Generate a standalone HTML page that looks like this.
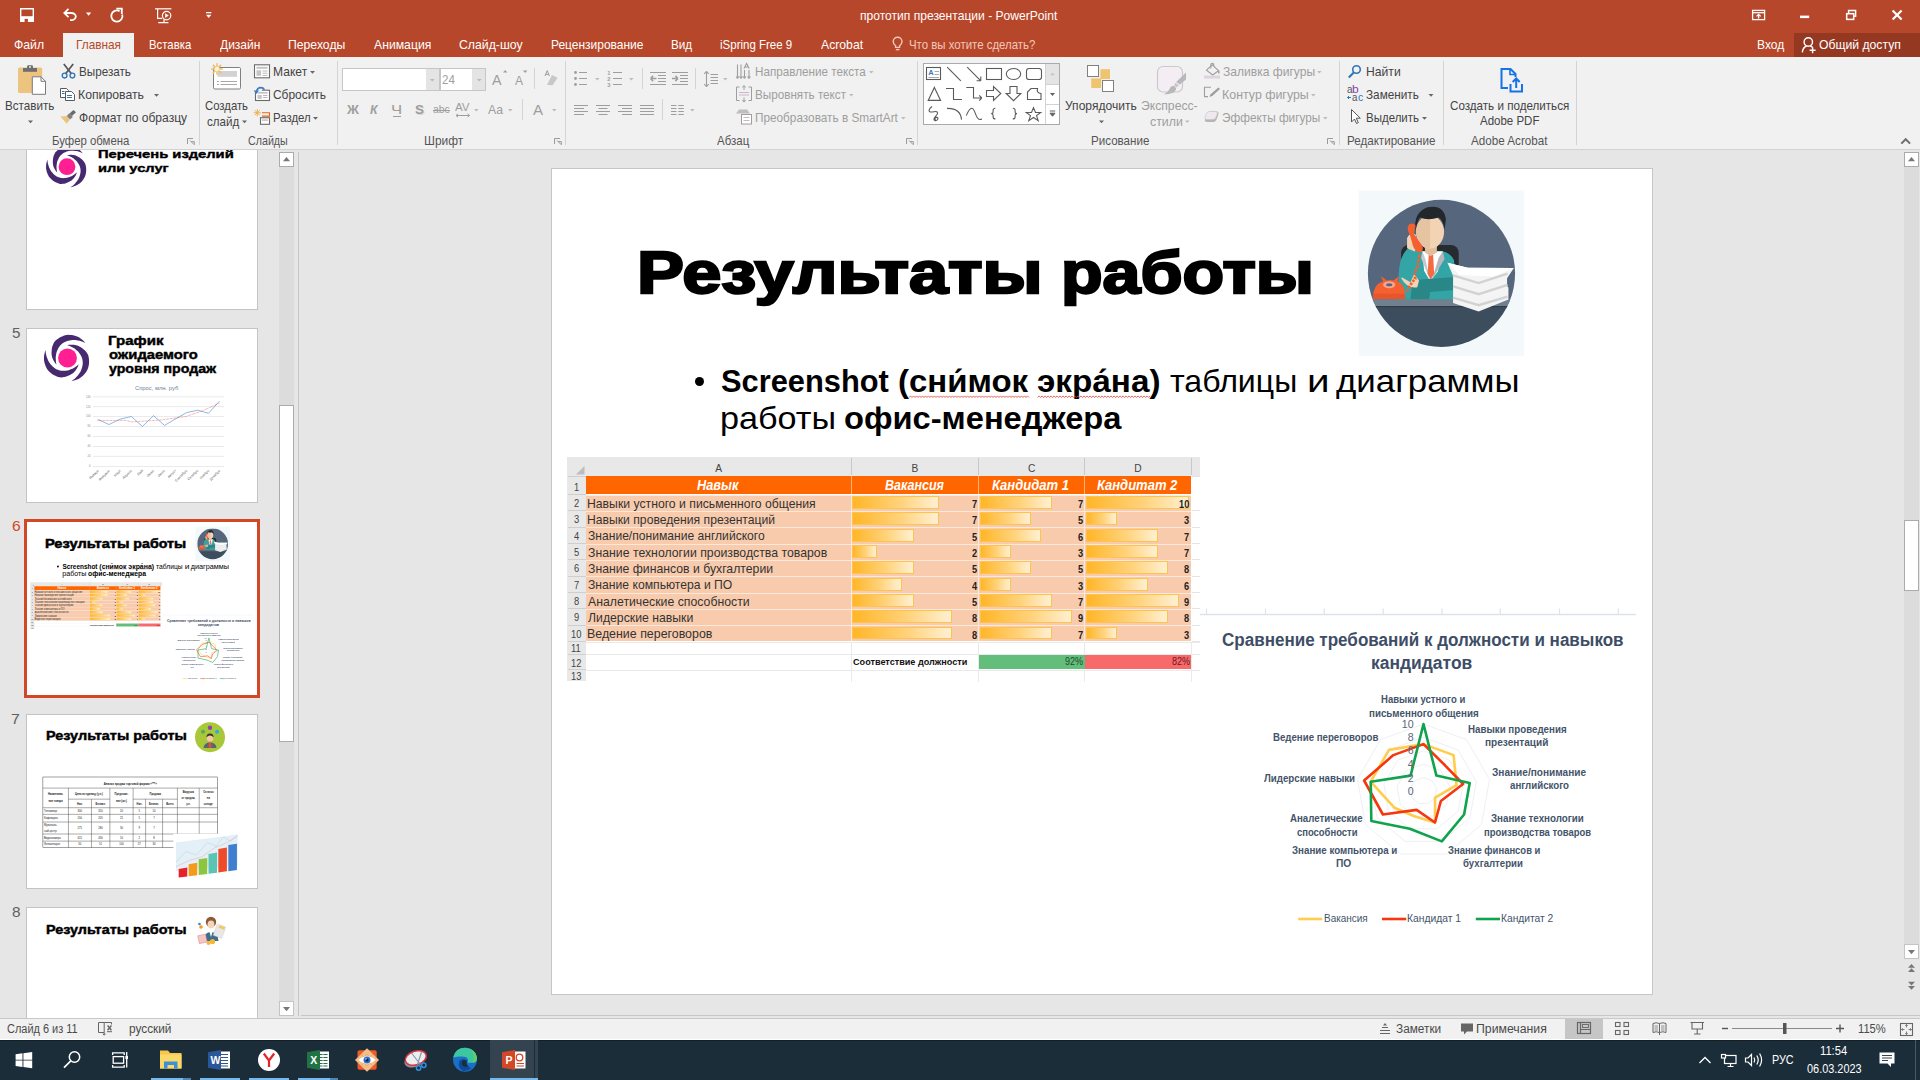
<!DOCTYPE html>
<html lang="ru"><head><meta charset="utf-8"><title>прототип презентации - PowerPoint</title>
<style>
html,body{margin:0;padding:0;}
body{width:1920px;height:1080px;overflow:hidden;position:relative;background:#E6E6E6;font-family:"Liberation Sans",sans-serif;}
.a{position:absolute;display:block;}
.t{position:absolute;white-space:nowrap;transform-origin:0 0;}
svg{overflow:visible}
svg text{font-family:"Liberation Sans",sans-serif;}
</style></head><body>
<div class="a" style="left:0.00px;top:0.00px;width:1920.00px;height:57.00px;background:#B7472A;"></div>
<div class="a" style="left:1794.00px;top:33.00px;width:126.00px;height:24.00px;background:#953822;"></div>
<div class="a" style="left:63.00px;top:33.00px;width:71.00px;height:24.00px;background:#F1F1F1;"></div>
<div class="a" style="left:0.00px;top:57.00px;width:1920.00px;height:92.00px;background:#F1F1F1;"></div>
<div class="a" style="left:0.00px;top:149.00px;width:1920.00px;height:1.00px;background:#D2D2D2;"></div>
<div class="t" style="left:14.30px;top:38.50px;font-size:12.40px;line-height:12.40px;color:#fff;transform:scaleX(0.9858);">Файл</div>
<div class="t" style="left:148.67px;top:38.50px;font-size:12.40px;line-height:12.40px;color:#fff;transform:scaleX(0.9163);">Вставка</div>
<div class="t" style="left:219.91px;top:38.50px;font-size:12.40px;line-height:12.40px;color:#fff;transform:scaleX(0.9698);">Дизайн</div>
<div class="t" style="left:288.01px;top:38.50px;font-size:12.40px;line-height:12.40px;color:#fff;transform:scaleX(0.9858);">Переходы</div>
<div class="t" style="left:373.98px;top:38.50px;font-size:12.40px;line-height:12.40px;color:#fff;transform:scaleX(0.9856);">Анимация</div>
<div class="t" style="left:459.38px;top:38.50px;font-size:12.40px;line-height:12.40px;color:#fff;transform:scaleX(0.9901);">Слайд-шоу</div>
<div class="t" style="left:551.02px;top:38.50px;font-size:12.40px;line-height:12.40px;color:#fff;transform:scaleX(0.9662);">Рецензирование</div>
<div class="t" style="left:671.04px;top:38.50px;font-size:12.40px;line-height:12.40px;color:#fff;transform:scaleX(0.9432);">Вид</div>
<div class="t" style="left:720.23px;top:38.50px;font-size:12.40px;line-height:12.40px;color:#fff;transform:scaleX(0.9285);">iSpring Free 9</div>
<div class="t" style="left:820.98px;top:38.50px;font-size:12.40px;line-height:12.40px;color:#fff;transform:scaleX(0.9855);">Acrobat</div>
<div class="t" style="left:75.53px;top:38.50px;font-size:12.40px;line-height:12.40px;color:#B7472A;transform:scaleX(0.9543);">Главная</div>
<div class="t" style="left:908.71px;top:38.50px;font-size:12.40px;line-height:12.40px;color:#F2C8BA;transform:scaleX(0.9229);">Что вы хотите сделать?</div>
<div class="t" style="left:859.66px;top:9.83px;font-size:12.60px;line-height:12.60px;color:#fff;transform:scaleX(0.9594);">прототип презентации - PowerPoint</div>
<div class="t" style="left:1757.01px;top:38.50px;font-size:12.40px;line-height:12.40px;color:#fff;transform:scaleX(0.9693);">Вход</div>
<div class="t" style="left:1819.42px;top:38.50px;font-size:12.40px;line-height:12.40px;color:#fff;transform:scaleX(0.9833);">Общий доступ</div>
<svg class="a" style="left:0.00px;top:0.00px;" width="1920" height="60" viewBox="0 0 1920 60"><g fill="none" stroke="#fff" stroke-width="1.4"><path d="M20.7 8.7h12.6v12.6h-12.6z"/></g><path fill="#fff" d="M21 16.200h12v5.800h-12z"/><rect x="24.600" y="18.900" width="3.300" height="3.200" fill="#B7472A"/><g fill="none" stroke="#fff" stroke-width="1.800" stroke-linecap="butt"><path d="M68.5 8.8l-4.2 4.2l4.2 4.2"/><path d="M64.6 13h6.6a4.6 3.6 0 0 1 0 7.2h-1.2"/><path d="M119.6 11.2a5.6 5.6 0 1 0 2.6 3.2"/><path d="M116.4 8.6h5.4v5.4" /></g><path fill="#fff" d="M86 12.6h5.2l-2.6 3.2z"/><g fill="none" stroke="#fff" stroke-width="1.2"><path d="M155 8.8h16.4"/><path d="M157.6 9v9.4h4.6"/><circle cx="166.6" cy="15.6" r="4.2"/><path d="M164 19.2v3.2M158.2 22.6h10.2"/></g><path fill="#fff" d="M165.2 13.2l3.6 2.4l-3.6 2.4z"/><path fill="#fff" d="M206 12h5.4v1.2h-5.4zM206 14.8h5.4l-2.7 3.2z"/><g fill="none" stroke="#F2C8BA" stroke-width="1.400"><path d="M895.6 47.4v-1.6c-1.6-1.2-2.4-2.6-2.4-4.2a4.4 4.4 0 0 1 8.8 0c0 1.6-0.8 3-2.4 4.2v1.6z"/><path d="M895.8 49.6h3.6"/></g><g fill="none" stroke="#fff" stroke-width="1.300"><rect x="1752.600" y="10.400" width="12" height="9.200"/><path d="M1752.600 12.700h12"/><path d="M1758.600 18.400v-3.800M1756.500 16.400l2.100-2.100l2.100 2.100"/></g><path fill="#fff" d="M1800 15.600h9.200v2.500h-9.200z"/><g fill="none" stroke="#fff" stroke-width="1.500"><rect x="1846.700" y="13.700" width="7" height="5.700"/><path d="M1848.600 13.500v-3h7v5.700h-2"/></g><path stroke="#fff" stroke-width="2.200" d="M1892.600 10.400l9 9.200M1901.600 10.400l-9 9.200"/><g fill="none" stroke="#fff" stroke-width="1.400"><circle cx="1808.300" cy="42" r="4.200"/><path d="M1802.300 52.300c0.500-3.600 2-5.600 4.400-6.300M1810.200 46c1 0.300 1.800 0.800 2.500 1.500"/><path d="M1812.600 47.200v6M1809.600 50.200h6"/></g></svg>
<div class="a" style="left:199.00px;top:61.00px;width:1.00px;height:84.00px;background:#D4D4D4;"></div>
<div class="a" style="left:337.00px;top:61.00px;width:1.00px;height:84.00px;background:#D4D4D4;"></div>
<div class="a" style="left:565.00px;top:61.00px;width:1.00px;height:84.00px;background:#D4D4D4;"></div>
<div class="a" style="left:917.00px;top:61.00px;width:1.00px;height:84.00px;background:#D4D4D4;"></div>
<div class="a" style="left:1339.00px;top:61.00px;width:1.00px;height:84.00px;background:#D4D4D4;"></div>
<div class="a" style="left:1443.00px;top:61.00px;width:1.00px;height:84.00px;background:#D4D4D4;"></div>
<div class="a" style="left:1576.00px;top:61.00px;width:1.00px;height:84.00px;background:#D4D4D4;"></div>
<div class="t" style="left:5.04px;top:99.67px;font-size:12.20px;line-height:12.20px;color:#444;transform:scaleX(0.9559);">Вставить</div>
<div class="t" style="left:78.54px;top:65.67px;font-size:12.20px;line-height:12.20px;color:#444;transform:scaleX(0.9571);">Вырезать</div>
<div class="t" style="left:78.49px;top:88.67px;font-size:12.20px;line-height:12.20px;color:#444;transform:scaleX(1.0048);">Копировать</div>
<div class="t" style="left:78.80px;top:111.67px;font-size:12.20px;line-height:12.20px;color:#444;transform:scaleX(0.9892);">Формат по образцу</div>
<div class="t" style="left:51.57px;top:134.67px;font-size:12.20px;line-height:12.20px;color:#555;transform:scaleX(0.9341);">Буфер обмена</div>
<div class="t" style="left:204.92px;top:99.67px;font-size:12.20px;line-height:12.20px;color:#444;transform:scaleX(0.9283);">Создать</div>
<div class="t" style="left:207.01px;top:115.67px;font-size:12.20px;line-height:12.20px;color:#444;transform:scaleX(0.9485);">слайд</div>
<div class="t" style="left:273.01px;top:65.67px;font-size:12.20px;line-height:12.20px;color:#444;transform:scaleX(0.9904);">Макет</div>
<div class="t" style="left:273.39px;top:88.67px;font-size:12.20px;line-height:12.20px;color:#444;transform:scaleX(0.9791);">Сбросить</div>
<div class="t" style="left:273.06px;top:111.67px;font-size:12.20px;line-height:12.20px;color:#444;transform:scaleX(0.9356);">Раздел</div>
<div class="t" style="left:248.46px;top:134.67px;font-size:12.20px;line-height:12.20px;color:#555;transform:scaleX(0.8760);">Слайды</div>
<div class="a" style="left:342.00px;top:68.00px;width:98.00px;height:23.00px;background:#fff;border:1px solid #C6C6C6;box-sizing:border-box;"></div>
<div class="a" style="left:426.00px;top:69.00px;width:13.00px;height:21.00px;background:#E4E4E4;"></div>
<div class="a" style="left:440.00px;top:68.00px;width:46.00px;height:23.00px;background:#fff;border:1px solid #C6C6C6;box-sizing:border-box;"></div>
<div class="a" style="left:472.00px;top:69.00px;width:13.00px;height:21.00px;background:#E4E4E4;"></div>
<div class="t" style="left:442.42px;top:73.67px;font-size:12.20px;line-height:12.20px;color:#9E9E9E;transform:scaleX(0.9524);">24</div>
<div class="t" style="left:492.47px;top:72.30px;font-size:15.00px;line-height:15.00px;color:#9E9E9E;transform:scaleX(0.9551);">A</div>
<div class="t" style="left:514.98px;top:74.84px;font-size:12.00px;line-height:12.00px;color:#9E9E9E;transform:scaleX(1.0054);">A</div>
<div class="a" style="left:534.00px;top:67.50px;width:1.00px;height:21.50px;background:#D4D4D4;"></div>
<div class="t" style="left:347.04px;top:103.00px;font-size:13.00px;line-height:13.00px;color:#9E9E9E;font-weight:bold;transform:scaleX(1.0125);">Ж</div>
<div class="t" style="left:369.79px;top:103.00px;font-size:13.00px;line-height:13.00px;color:#9E9E9E;font-weight:bold;font-style:italic;transform:scaleX(0.9405);">К</div>
<div class="t" style="left:391.19px;top:103.00px;font-size:13.00px;line-height:13.00px;color:#9E9E9E;transform:scaleX(1.2900);">Ч</div>
<div class="a" style="left:392.50px;top:115.50px;width:8.50px;height:1.00px;background:#9E9E9E;"></div>
<div class="t" style="left:414.62px;top:103.00px;font-size:13.00px;line-height:13.00px;color:#9E9E9E;font-weight:bold;transform:scaleX(1.0271);text-shadow:1px 1px 0 #D8D8D8;">S</div>
<div class="t" style="left:432.56px;top:104.27px;font-size:11.50px;line-height:11.50px;color:#9E9E9E;transform:scaleX(0.9014);">abc</div>
<div class="a" style="left:432.50px;top:110.00px;width:17.00px;height:1.00px;background:#9E9E9E;"></div>
<div class="t" style="left:455.48px;top:102.19px;font-size:11.00px;line-height:11.00px;color:#9E9E9E;transform:scaleX(1.0517);">AV</div>
<div class="t" style="left:487.98px;top:103.00px;font-size:13.00px;line-height:13.00px;color:#9E9E9E;transform:scaleX(0.9448);">Aa</div>
<div class="a" style="left:522.00px;top:99.00px;width:1.00px;height:21.00px;background:#D4D4D4;"></div>
<div class="t" style="left:532.97px;top:102.30px;font-size:15.00px;line-height:15.00px;color:#9E9E9E;transform:scaleX(1.0054);">A</div>
<div class="t" style="left:423.52px;top:134.67px;font-size:12.20px;line-height:12.20px;color:#555;transform:scaleX(0.9761);">Шрифт</div>
<div class="a" style="left:642.00px;top:67.50px;width:1.00px;height:21.50px;background:#D4D4D4;"></div>
<div class="a" style="left:695.00px;top:67.50px;width:1.00px;height:21.50px;background:#D4D4D4;"></div>
<div class="t" style="left:755.04px;top:65.67px;font-size:12.20px;line-height:12.20px;color:#9E9E9E;transform:scaleX(0.9594);">Направление текста</div>
<div class="t" style="left:755.04px;top:88.67px;font-size:12.20px;line-height:12.20px;color:#9E9E9E;transform:scaleX(0.9592);">Выровнять текст</div>
<div class="t" style="left:755.04px;top:111.67px;font-size:12.20px;line-height:12.20px;color:#9E9E9E;transform:scaleX(0.9666);">Преобразовать в SmartArt</div>
<div class="a" style="left:662.00px;top:99.00px;width:1.00px;height:21.00px;background:#D4D4D4;"></div>
<div class="t" style="left:716.98px;top:134.67px;font-size:12.20px;line-height:12.20px;color:#555;transform:scaleX(0.9434);">Абзац</div>
<div class="a" style="left:923.00px;top:63.00px;width:137.00px;height:62.00px;background:#fff;border:1px solid #A6ABB0;box-sizing:border-box;"></div>
<div class="a" style="left:1045.00px;top:64.00px;width:1.00px;height:60.00px;background:#D0D3D6;"></div>
<div class="a" style="left:1046.00px;top:64.00px;width:13.00px;height:20.00px;background:#E4E4E4;"></div>
<div class="a" style="left:1046.00px;top:84.00px;width:13.00px;height:1.00px;background:#D0D3D6;"></div>
<div class="a" style="left:1046.00px;top:103.50px;width:13.00px;height:1.00px;background:#D0D3D6;"></div>
<div class="t" style="left:1064.68px;top:99.67px;font-size:12.20px;line-height:12.20px;color:#444;transform:scaleX(0.9892);">Упорядочить</div>
<div class="t" style="left:1141.38px;top:99.67px;font-size:12.20px;line-height:12.20px;color:#9E9E9E;transform:scaleX(0.9979);">Экспресс-</div>
<div class="t" style="left:1150.47px;top:115.67px;font-size:12.20px;line-height:12.20px;color:#9E9E9E;transform:scaleX(1.0138);">стили</div>
<div class="t" style="left:1222.60px;top:65.67px;font-size:12.20px;line-height:12.20px;color:#9E9E9E;transform:scaleX(0.9899);">Заливка фигуры</div>
<div class="t" style="left:1221.98px;top:88.67px;font-size:12.20px;line-height:12.20px;color:#9E9E9E;transform:scaleX(1.0184);">Контур фигуры</div>
<div class="t" style="left:1222.39px;top:111.67px;font-size:12.20px;line-height:12.20px;color:#9E9E9E;transform:scaleX(0.9681);">Эффекты фигуры</div>
<div class="t" style="left:1091.05px;top:134.67px;font-size:12.20px;line-height:12.20px;color:#555;transform:scaleX(0.9516);">Рисование</div>
<div class="t" style="left:1365.60px;top:65.67px;font-size:12.20px;line-height:12.20px;color:#444;transform:scaleX(0.9980);">Найти</div>
<div class="t" style="left:1365.92px;top:88.67px;font-size:12.20px;line-height:12.20px;color:#444;transform:scaleX(0.9643);">Заменить</div>
<div class="t" style="left:1365.66px;top:111.67px;font-size:12.20px;line-height:12.20px;color:#444;transform:scaleX(0.9437);">Выделить</div>
<div class="t" style="left:1346.65px;top:134.67px;font-size:12.20px;line-height:12.20px;color:#555;transform:scaleX(0.9519);">Редактирование</div>
<div class="t" style="left:1346.68px;top:83.91px;font-size:10.50px;line-height:10.50px;color:#555;transform:scaleX(0.9455);">a</div>
<div class="t" style="left:1352.23px;top:83.91px;font-size:10.50px;line-height:10.50px;color:#8A3FA8;transform:scaleX(1.1436);">b</div>
<div class="t" style="left:1352.19px;top:91.51px;font-size:10.50px;line-height:10.50px;color:#555;transform:scaleX(0.9270);">a</div>
<div class="t" style="left:1357.76px;top:91.51px;font-size:10.50px;line-height:10.50px;color:#2E75B6;transform:scaleX(0.9940);">c</div>
<div class="t" style="left:1449.91px;top:99.67px;font-size:12.20px;line-height:12.20px;color:#444;transform:scaleX(0.9539);">Создать и поделиться</div>
<div class="t" style="left:1479.98px;top:115.17px;font-size:12.20px;line-height:12.20px;color:#444;transform:scaleX(0.9431);">Adobe PDF</div>
<div class="t" style="left:1470.98px;top:134.67px;font-size:12.20px;line-height:12.20px;color:#555;transform:scaleX(0.9571);">Adobe Acrobat</div>
<svg class="a" style="left:0.00px;top:0.00px;" width="1920" height="150" viewBox="0 0 1920 150"><path fill="#666" d="M28.0 120.5h5.0l-2.5 2.8z"/><path fill="#666" d="M154.0 94.0h5.0l-2.5 2.8z"/><g fill="none" stroke="#9A9A9A" stroke-width="1"><path d="M187.5 144.0v-5.500h5.500"/><path d="M190.0 140.5l4 4M194.3 144.8v-3.2h-3.2" /></g><rect x="18" y="67.5" width="24.200" height="25.500" rx="1.500" fill="#EDC47F"/><rect x="23" y="68" width="14" height="3.800" fill="#6E6E6E"/><path d="M27 68.500v-1.800q0-1.400 1.400-1.400h3.200q1.400 0 1.400 1.400v1.800z" fill="#6E6E6E"/><rect x="29" y="66.300" width="2" height="1.400" fill="#F1F1F1"/><path d="M32.300 76.800h8.700l4.500 4.500v13h-13.200z" fill="#fff" stroke="#7A7A7A" stroke-width="1"/><path d="M41 76.800v4.500h4.500" fill="none" stroke="#7A7A7A" stroke-width="1"/><g fill="none" stroke="#555" stroke-width="1.700"><path d="M63.800 64l7.800 10M73.200 64l-7.800 10"/></g><g fill="none" stroke="#2E75B6" stroke-width="1.3"><circle cx="64.6" cy="75.6" r="2.4"/><circle cx="72.4" cy="75.6" r="2.4"/></g><g fill="#fff" stroke="#5A5A5A" stroke-width="1"><path d="M60.5 88.5h6l2 2v7h-8z"/><path d="M65.5 91.5h6l3 3v6h-9z"/></g><g stroke="#2E75B6" stroke-width="1"><path d="M67 95.5h5M67 97.5h5M62 91.5h2.5M62 93.5h2.5"/></g><path d="M73.400 110.100l2.600 2.100l-4.100 3.700l-2.600-2.100z" fill="#6A6A6A"/><path d="M69.300 113.300l3.600 3.600l-2.900 2.600l-3.300-3.600z" fill="#808080"/><path d="M66.700 115.900l3.300 3.600l-3.300 4.200l-6.300-7.300z" fill="#EDC47F"/><path fill="#666" d="M242.0 120.5h5.0l-2.5 2.8z"/><path fill="#666" d="M310.0 71.0h5.0l-2.5 2.8z"/><path fill="#666" d="M313.0 117.0h5.0l-2.5 2.8z"/><rect x="213.500" y="67.500" width="27" height="21.500" rx="1.200" fill="#fff" stroke="#808080"/><rect x="217.500" y="71" width="19.500" height="5.800" fill="#D2D2D2"/><path d="M217 81.500h2M220.500 81.500h16.500M217 84.500h2M220.500 84.500h16.500" stroke="#A8A8A8"/><g stroke="#F0C060" stroke-width="1.500"><path d="M217 63.200v11.600M211.200 69h11.600M212.900 64.900l8.200 8.200M221.100 64.900l-8.200 8.200"/></g><circle cx="217" cy="69" r="2.300" fill="#F1F1F1"/><rect x="254.500" y="64.800" width="15" height="13" fill="#fff" stroke="#6A6A6A" stroke-width="1.100"/><rect x="256.500" y="66.800" width="11" height="2" fill="#C4C4C4"/><rect x="256.500" y="70.300" width="4.600" height="5.500" fill="#C4C4C4"/><path d="M262.500 71h5M262.500 73.200h5M262.500 75.400h5" stroke="#B0B0B0" stroke-width="0.900"/><rect x="255.500" y="90.200" width="14" height="10.300" fill="#fff" stroke="#6A6A6A" stroke-width="1.100"/><rect x="257.500" y="92" width="10" height="1.700" fill="#C4C4C4"/><rect x="257.500" y="95" width="4.300" height="3.800" fill="#C4C4C4"/><path d="M263 95.500h4.500M263 97.500h4.500" stroke="#B0B0B0" stroke-width="0.900"/><rect x="253" y="86" width="9" height="6" fill="#F1F1F1"/><path d="M256.300 92.600q0.400-5 4.700-5q2.300 0 3.400 2" fill="none" stroke="#3B7DC4" stroke-width="1.600"/><path d="M253.600 90.600h5.400l-2.700 3.400z" fill="#3B7DC4"/><g stroke="#F0B050" stroke-width="1"><path d="M257.300 109.200v7M253.800 112.700h7M254.800 110.200l5 5M259.800 110.200l-5 5"/></g><path d="M262 112.700h7.500v3.400h-7.500" fill="none" stroke="#E8651A" stroke-width="1.100"/><rect x="260.500" y="117.700" width="9" height="6.600" fill="#fff" stroke="#6A6A6A" stroke-width="1.100"/><rect x="262" y="119.300" width="6" height="1.600" fill="#C4C4C4"/><path fill="#B8B8B8" d="M430.0 79.0h4.6l-2.3 2.6z"/><path fill="#B8B8B8" d="M477.0 79.0h4.6l-2.3 2.6z"/><path d="M503 72.6l2.2-2.6l2.2 2.6z" fill="#9E9E9E"/><path d="M523 70.4h4.4l-2.2 2.6z" fill="#9E9E9E"/><path d="M547 85l5-10l5.6 2.8l-5 7.4z" fill="#C8C8C8"/><path d="M545 76l2.2-5.4l2.2 5.4M545.8 74.4h2.8" fill="none" stroke="#9E9E9E" stroke-width="1"/><path d="M456 115.5h13.6M456 115.5l2-1.6M456 115.5l2 1.6M469.6 115.5l-2-1.6M469.6 115.5l-2 1.6" stroke="#9E9E9E" fill="none"/><path fill="#BDBDBD" d="M474.0 109.0h4.6l-2.3 2.6z"/><path fill="#BDBDBD" d="M508.0 109.0h4.6l-2.3 2.6z"/><path fill="#BDBDBD" d="M552.0 109.0h4.6l-2.3 2.6z"/><g fill="none" stroke="#9A9A9A" stroke-width="1"><path d="M554.5 144.0v-5.500h5.500"/><path d="M557.0 140.5l4 4M561.3 144.8v-3.2h-3.2" /></g><circle cx="575.500" cy="72.5" r="1.400" fill="#9E9E9E"/><path d="M579 72.5h8" stroke="#9E9E9E" stroke-width="1"/><circle cx="575.500" cy="78.5" r="1.400" fill="#9E9E9E"/><path d="M579 78.5h8" stroke="#9E9E9E" stroke-width="1"/><circle cx="575.500" cy="84.5" r="1.400" fill="#9E9E9E"/><path d="M579 84.5h8" stroke="#9E9E9E" stroke-width="1"/><path fill="#BDBDBD" d="M595.0 78.0h4.6l-2.3 2.6z"/><path d="M613 72.5h9" stroke="#9E9E9E" stroke-width="1"/><text x="607.300" y="74.6" font-size="5.800" font-weight="bold" fill="#9E9E9E">1</text><path d="M613 78.5h9" stroke="#9E9E9E" stroke-width="1"/><text x="607.300" y="80.6" font-size="5.800" font-weight="bold" fill="#9E9E9E">2</text><path d="M613 84.5h9" stroke="#9E9E9E" stroke-width="1"/><text x="607.300" y="86.6" font-size="5.800" font-weight="bold" fill="#9E9E9E">3</text><path fill="#BDBDBD" d="M629.0 78.0h4.6l-2.3 2.6z"/><path d="M650.0 72.500h16M658.0 75.500h8M658.0 78.500h8M658.0 81.500h8M650.0 84.500h16" stroke="#9E9E9E" stroke-width="1"/><path d="M650.5 78.500h6M650.5 78.500l2.600-2.600M650.5 78.500l2.600 2.600" stroke="#9E9E9E" fill="none" stroke-width="1.500"/><path d="M672.0 72.500h16M680.0 75.500h8M680.0 78.500h8M680.0 81.500h8M672.0 84.500h16" stroke="#9E9E9E" stroke-width="1"/><path d="M672.0 78.500h6M678.0 78.500l-2.600-2.600M678.0 78.500l-2.600 2.600" stroke="#9E9E9E" fill="none" stroke-width="1.500"/><path d="M710.500 74.500h7.500M710.500 77.500h7.500M710.500 80.500h7.500M710.500 83.500h7.500" stroke="#9E9E9E" stroke-width="1"/><path d="M706.500 72v14M706.500 71.300l-2.400 2.700M706.500 71.300l2.400 2.700M706.500 86.700l-2.400-2.700M706.500 86.700l2.400-2.700" stroke="#9E9E9E" fill="none" stroke-width="1.100"/><path fill="#BDBDBD" d="M723.0 78.0h4.6l-2.3 2.6z"/><g stroke="#9E9E9E" fill="none" stroke-width="1.1"><path d="M737.5 64.5v12.5M741 64.5v12.5M744.5 70v7M749 70v7M737.5 78.5l-1.4-2M737.5 78.5l1.4-2M741 78.5l-1.4-2M741 78.5l1.4-2M744.5 78.5l-1.4-2M744.5 78.5l1.4-2M749 78.5l-1.4-2M749 78.5l1.4-2"/><path d="M744 68.5l2.6-5l2.6 5M745 67h3.4"/></g><path fill="#BDBDBD" d="M869.0 71.0h4.6l-2.3 2.6z"/><g stroke="#9E9E9E" fill="none" stroke-width="1"><path d="M739.5 87h-3v13.5h3M748.5 87h3v13.5h-3"/><path d="M739 92.5h10M739 95h10" stroke="#CDB5C8"/><path d="M744 86v4M744 85.5l-1.6 2M744 85.5l1.6 2M744 97.5v4M744 102l-1.6-2M744 102l1.6-2"/></g><path fill="#BDBDBD" d="M849.0 94.0h4.6l-2.3 2.6z"/><path d="M736 113.5l3-4h8l3 4z" fill="#BEBEBE"/><rect x="741.5" y="114.5" width="10" height="9.5" fill="#fff" stroke="#9E9E9E"/><path d="M743.5 117.5h6M743.5 120.5h6" stroke="#CDB5C8"/><path fill="#BDBDBD" d="M901.0 117.0h4.6l-2.3 2.6z"/><path d="M574.0 105.5h14.0M574.0 108.5h10.0M574.0 111.5h14.0M574.0 114.5h10.0" stroke="#9E9E9E" stroke-width="1"/><path d="M596.0 105.5h14.0M598.5 108.5h9.0M596.0 111.5h14.0M598.5 114.5h9.0" stroke="#9E9E9E" stroke-width="1"/><path d="M618.0 105.5h14.0M622.0 108.5h10.0M618.0 111.5h14.0M622.0 114.5h10.0" stroke="#9E9E9E" stroke-width="1"/><path d="M640.0 105.5h14.0M640.0 108.5h14.0M640.0 111.5h14.0M640.0 114.5h14.0" stroke="#9E9E9E" stroke-width="1"/><path d="M671 105.5h5.500M678.300 105.5h5.500M671 108.5h5.500M678.300 108.5h5.500M671 111.5h5.500M678.300 111.5h5.500M671 114.5h5.500M678.300 114.5h5.500" stroke="#9E9E9E" stroke-width="1"/><path fill="#BDBDBD" d="M690.0 109.0h4.6l-2.3 2.6z"/><g fill="none" stroke="#9A9A9A" stroke-width="1"><path d="M906.5 144.0v-5.500h5.500"/><path d="M909.0 140.5l4 4M913.3 144.8v-3.2h-3.2" /></g><path d="M1050 75.300l2.500-2.800l2.500 2.800z" fill="#C6C6C6"/><path d="M1050 93h5l-2.500 3z" fill="#606060"/><path d="M1049.800 111h5.400M1050 113.200h5l-2.500 3z" fill="#606060" stroke="#606060" stroke-width="1"/><g fill="none" stroke="#5A5A5A" stroke-width="1.100"><rect x="926.500" y="67.500" width="14" height="12"/><path d="M947.200 67.200l13.600 13.600"/><path d="M967.200 67.200l13.600 13.600M980.800 80.800v-4.200M980.800 80.800h-4.200"/><rect x="986.500" y="68.500" width="15" height="11"/><ellipse cx="1013.500" cy="74" rx="7.200" ry="5.500"/><rect x="1026.500" y="68.500" width="15" height="11" rx="2.600"/><path d="M934.400 87.400l6.200 13h-12.400z"/><path d="M946 88.500h7.500v11h8.500"/><path d="M966.300 87.500h7.200v10.500h8M981.800 98l-2.600-2.600M981.800 98l-2.600 2.600"/><path d="M986.500 90.500h7v-4l7.300 7l-7.300 7v-4h-7z"/><path d="M1010 86.500h7v7h3.800l-7.300 7.200l-7.300-7.200h3.800z"/><path d="M1027.500 99.500v-7.500l3.500-3.500h6.500q-1.200 4.600 3.500 5v6z"/><path d="M932 106.500c-3 2-4 5-1.500 5.500c3 0.500 6-2 7 0.500c1 2.500-4 4.500-3.500 7c0.500 2 4 1 4-1c0-1.500-2.500-1.500-3-0.300c-0.500 1.500 0.500 2.300 1 2.800"/><path d="M947 108.400q13.500-0.400 14.500 11.200"/><path d="M966.300 115.600c2-5 3.600-7.400 5.600-7.400c3.400 0 3.600 11.400 7.800 11.300q1.200 0 2.200-0.500"/><path d="M995.400 108.300q-2.300 0-2.300 2v1.600q0 1.700-1.900 1.700q1.900 0 1.900 1.700v1.600q0 2 2.300 2"/><path d="M1012.800 108.300q2.300 0 2.300 2v1.600q0 1.700 1.900 1.700q-1.900 0-1.900 1.700v1.600q0 2-2.300 2"/><path d="M1033.500 107.600l2 4.900h5.200l-4.200 3.100l1.700 5l-4.700-3.100l-4.700 3.100l1.700-5l-4.200-3.100h5.200z"/></g><text x="928.300" y="75.300" font-size="7.500" font-weight="bold" fill="#3B78C3">A</text><path d="M934.500 71.500h4.500M934.500 74.500h4.500M928.500 77.500h10.500" stroke="#A0A0A0" stroke-width="0.900"/><rect x="1100.400" y="69.200" width="9.600" height="9.800" fill="#EFC46F"/><rect x="1091.200" y="78.400" width="9.900" height="9.600" fill="#EFC46F"/><rect x="1087.500" y="65.500" width="11" height="11" fill="#fff" stroke="#808080"/><rect x="1102.500" y="80.500" width="11" height="11" fill="#fff" stroke="#808080"/><path fill="#666" d="M1099.0 120.5h5.0l-2.5 2.8z"/><rect x="1157.500" y="66.500" width="25" height="25.500" rx="5.500" fill="#F4EEF4" stroke="#CCC8CC" stroke-width="1.200"/><path d="M1186 72.600v6.800l-6.200 5.200l-3.600-2.600z" fill="#B8B8B8"/><path d="M1175.600 82.800l3.400 2.500l-2.600 2.200l-2.400-2.200z" fill="#C8C8C8"/><path d="M1173.500 86q3 1 2.500 3.500q-1.500 4.500-12 5q5-3.500 6-6.500q1-2.500 3.500-2z" fill="#B8B8B8"/><path fill="#BDBDBD" d="M1185.0 120.5h4.6l-2.3 2.6z"/><path fill="#BDBDBD" d="M1317.0 71.0h4.6l-2.3 2.6z"/><path fill="#BDBDBD" d="M1311.0 94.0h4.6l-2.3 2.6z"/><path fill="#BDBDBD" d="M1323.0 117.0h4.6l-2.3 2.6z"/><g fill="none" stroke="#9E9E9E" stroke-width="1.100"><path d="M1206.500 70.200l5.800-5.400l6.200 5.800l-5.800 4.400z"/><path d="M1210.800 68.500v-3.600q0-1.600 1.500-1.600q1.500 0 1.500 1.600v1.200"/></g><path d="M1218.600 69.500q1.800 2.800 0.400 4.400q-1.600-0.600-0.400-4.400z" fill="#9E9E9E"/><rect x="1204" y="75.600" width="16" height="3" fill="#DDD5DD"/><g fill="none" stroke="#9E9E9E" stroke-width="1.100"><path d="M1211 87.200h-6.500v9.400h3.500"/></g><path d="M1218.400 87.400l1.600 1.600l-7.800 7l-2.800 1l1.200-2.800z" fill="#9E9E9E"/><path d="M1207.500 122q-3.500 0-2.500-3l1.800-5q0.900-2.500 3.500-2.500h6q3 0 2 3l-1.800 5q-0.900 2.500-3.500 2.500z" fill="#B5B5B5"/><path d="M1207.300 119.600q-3 0-2.200-2.400l1.400-3.600q0.800-2.200 3.200-2.200h5.600q2.800 0 2 2.400l-1.400 3.600q-0.800 2.200-3.200 2.200z" fill="#EFE9EF" stroke="#C4C0C4" stroke-width="0.600"/><g fill="none" stroke="#9A9A9A" stroke-width="1"><path d="M1327.5 144.0v-5.500h5.500"/><path d="M1330.0 140.5l4 4M1334.3 144.8v-3.2h-3.2" /></g><path fill="#666" d="M1428.5 94.0h5.0l-2.5 2.8z"/><path fill="#666" d="M1422.0 117.0h5.0l-2.5 2.8z"/><circle cx="1356.500" cy="69.500" r="3.800" fill="none" stroke="#2E75B6" stroke-width="1.600"/><path d="M1353.800 72.500l-5 5" stroke="#2E75B6" stroke-width="2"/><path d="M1347.500 97.500h3.500M1347.500 97.500l1.500-1.500M1347.500 97.500l1.500 1.500" stroke="#2E75B6" fill="none"/><path d="M1351.500 109.500v12.500l3-3l2 4.500l1.800-0.800l-2-4.500h4z" fill="#fff" stroke="#555" stroke-width="1"/><g fill="none" stroke="#1473E6" stroke-width="2"><path d="M1508 88h-6.500v-19h9l5 5v3"/><path d="M1510 69v5.500h5.500" stroke-width="1.600"/><path d="M1510.500 84v7.500h11.500v-7.500M1516.200 88v-9M1512.700 82l3.500-3.500l3.500 3.500"/></g><path d="M1901.300 143.600l4.400-4.400l4.400 4.400" fill="none" stroke="#6E6E6E" stroke-width="2"/></svg>
<div class="a" style="left:0;top:150px;width:278px;height:868px;overflow:hidden"><div class="a" style="left:0;top:-150px;width:278px;height:1080px">
<div class="a" style="left:26.00px;top:135.00px;width:232.00px;height:175.00px;background:#fff;border:1px solid #C4C4C4;box-sizing:border-box;"></div>
<div class="a" style="left:26.00px;top:328.00px;width:232.00px;height:175.00px;background:#fff;border:1px solid #C4C4C4;box-sizing:border-box;"></div>
<div class="a" style="left:24.00px;top:519.00px;width:236.00px;height:179.00px;background:#D24726;"></div>
<div class="a" style="left:27.00px;top:522.00px;width:230.00px;height:173.00px;background:#fff;"></div>
<div class="a" style="left:26.00px;top:714.00px;width:232.00px;height:175.00px;background:#fff;border:1px solid #C4C4C4;box-sizing:border-box;"></div>
<div class="a" style="left:26.00px;top:907.00px;width:232.00px;height:175.00px;background:#fff;border:1px solid #C4C4C4;box-sizing:border-box;"></div>
<div class="t" style="left:11.69px;top:326.34px;font-size:14.60px;line-height:14.60px;color:#606060;transform:scaleX(1.0401);">5</div>
<div class="t" style="left:11.51px;top:519.34px;font-size:14.60px;line-height:14.60px;color:#D24726;transform:scaleX(1.0687);">6</div>
<div class="t" style="left:11.49px;top:712.34px;font-size:14.60px;line-height:14.60px;color:#606060;transform:scaleX(1.0848);">7</div>
<div class="t" style="left:11.63px;top:905.34px;font-size:14.60px;line-height:14.60px;color:#606060;transform:scaleX(1.0509);">8</div>
<div class="t" style="left:97.71px;top:149.05px;font-size:11.40px;line-height:11.40px;color:#000;font-weight:bold;transform:scaleX(1.2923);-webkit-text-stroke:0.4px #000;">Перечень изделий</div>
<div class="t" style="left:97.68px;top:163.35px;font-size:11.40px;line-height:11.40px;color:#000;font-weight:bold;transform:scaleX(1.2855);-webkit-text-stroke:0.4px #000;">или услуг</div>
<div class="t" style="left:108.29px;top:334.39px;font-size:13.60px;line-height:13.60px;color:#000;font-weight:bold;transform:scaleX(1.1071);-webkit-text-stroke:0.45px #000;">График</div>
<div class="t" style="left:108.72px;top:348.19px;font-size:13.60px;line-height:13.60px;color:#000;font-weight:bold;transform:scaleX(1.0876);-webkit-text-stroke:0.45px #000;">ожидаемого</div>
<div class="t" style="left:109.19px;top:362.09px;font-size:13.60px;line-height:13.60px;color:#000;font-weight:bold;transform:scaleX(1.0429);-webkit-text-stroke:0.45px #000;">уровня продаж</div>
<div class="t" style="left:134.70px;top:386.23px;font-size:5.40px;line-height:5.40px;color:#6F7F95;transform:scaleX(1.0788);">Спрос, млн. руб</div>
<div class="a" style="left:27px;top:521.800px;width:1101px;height:826px;transform:scale(0.20850);transform-origin:0 0;overflow:hidden">
<div class="t" style="left:85.79px;top:74.51px;font-size:60.00px;line-height:60.00px;color:#000;font-weight:bold;transform:scaleX(1.1726);-webkit-text-stroke:2.4px #000;">Результаты</div>
<div class="t" style="left:509.61px;top:74.51px;font-size:60.00px;line-height:60.00px;color:#000;font-weight:bold;transform:scaleX(1.1349);-webkit-text-stroke:2.4px #000;">работы</div>
<div class="a" style="left:143.5px;top:208.5px;width:9px;height:9px;border-radius:50%;background:#000"></div>
<div class="t" style="left:169.81px;top:197.31px;font-size:32.00px;line-height:32.00px;color:#000;font-weight:bold;transform:scaleX(0.9632);">Screenshot</div>
<div class="t" style="left:346.86px;top:197.31px;font-size:32.00px;line-height:32.00px;color:#000;font-weight:bold;transform:scaleX(1.0305);">(сни́мок</div>
<div class="t" style="left:486.46px;top:197.31px;font-size:32.00px;line-height:32.00px;color:#000;font-weight:bold;transform:scaleX(1.0394);">экра́на)</div>
<div class="t" style="left:618.95px;top:197.31px;font-size:32.00px;line-height:32.00px;color:#000;transform:scaleX(1.0032);">таблицы</div>
<div class="t" style="left:756.19px;top:197.31px;font-size:32.00px;line-height:32.00px;color:#000;transform:scaleX(1.2651);">и</div>
<div class="t" style="left:784.66px;top:197.31px;font-size:32.00px;line-height:32.00px;color:#000;transform:scaleX(1.0880);">диаграммы</div>
<div class="t" style="left:168.50px;top:233.91px;font-size:32.00px;line-height:32.00px;color:#000;transform:scaleX(1.0681);">работы</div>
<div class="t" style="left:292.52px;top:233.91px;font-size:32.00px;line-height:32.00px;color:#000;font-weight:bold;transform:scaleX(1.0201);">офис-менеджера</div>
<svg class="a" style="left:0;top:0" width="1101" height="826"><path d="M358.0 229.5l1.5 -1.6l1.5 1.6l1.5 -1.6l1.5 1.6l1.5 -1.6l1.5 1.6l1.5 -1.6l1.5 1.6l1.5 -1.6l1.5 1.6l1.5 -1.6l1.5 1.6l1.5 -1.6l1.5 1.6l1.5 -1.6l1.5 1.6l1.5 -1.6l1.5 1.6l1.5 -1.6l1.5 1.6l1.5 -1.6l1.5 1.6l1.5 -1.6l1.5 1.6l1.5 -1.6l1.5 1.6l1.5 -1.6l1.5 1.6l1.5 -1.6l1.5 1.6l1.5 -1.6l1.5 1.6l1.5 -1.6l1.5 1.6l1.5 -1.6l1.5 1.6l1.5 -1.6l1.5 1.6l1.5 -1.6l1.5 1.6l1.5 -1.6l1.5 1.6l1.5 -1.6l1.5 1.6l1.5 -1.6l1.5 1.6l1.5 -1.6l1.5 1.6l1.5 -1.6l1.5 1.6l1.5 -1.6l1.5 1.6l1.5 -1.6l1.5 1.6l1.5 -1.6l1.5 1.6l1.5 -1.6l1.5 1.6l1.5 -1.6l1.5 1.6l1.5 -1.6l1.5 1.6l1.5 -1.6l1.5 1.6l1.5 -1.6l1.5 1.6l1.5 -1.6l1.5 1.6l1.5 -1.6l1.5 1.6l1.5 -1.6l1.5 1.6l1.5 -1.6l1.5 1.6l1.5 -1.6l1.5 1.6l1.5 -1.6l1.5 1.6l1.5 -1.6l1.5 1.6" fill="none" stroke="#E0443A" stroke-width="0.8"/></svg>
<svg class="a" style="left:0;top:0" width="1101" height="826"><path d="M486.6 229.5l1.5 -1.6l1.5 1.6l1.5 -1.6l1.5 1.6l1.5 -1.6l1.5 1.6l1.5 -1.6l1.5 1.6l1.5 -1.6l1.5 1.6l1.5 -1.6l1.5 1.6l1.5 -1.6l1.5 1.6l1.5 -1.6l1.5 1.6l1.5 -1.6l1.5 1.6l1.5 -1.6l1.5 1.6l1.5 -1.6l1.5 1.6l1.5 -1.6l1.5 1.6l1.5 -1.6l1.5 1.6l1.5 -1.6l1.5 1.6l1.5 -1.6l1.5 1.6l1.5 -1.6l1.5 1.6l1.5 -1.6l1.5 1.6l1.5 -1.6l1.5 1.6l1.5 -1.6l1.5 1.6l1.5 -1.6l1.5 1.6l1.5 -1.6l1.5 1.6l1.5 -1.6l1.5 1.6l1.5 -1.6l1.5 1.6l1.5 -1.6l1.5 1.6l1.5 -1.6l1.5 1.6l1.5 -1.6l1.5 1.6l1.5 -1.6l1.5 1.6l1.5 -1.6l1.5 1.6l1.5 -1.6l1.5 1.6l1.5 -1.6l1.5 1.6l1.5 -1.6l1.5 1.6l1.5 -1.6l1.5 1.6l1.5 -1.6l1.5 1.6l1.5 -1.6l1.5 1.6l1.5 -1.6l1.5 1.6l1.5 -1.6l1.5 1.6l1.5 -1.6l1.5 1.6l1.5 -1.6" fill="none" stroke="#E0443A" stroke-width="0.8"/></svg>
<svg class="a" style="left:799px;top:12px" width="184" height="184" viewBox="0 0 1080 1080"><rect x="52" y="62" width="968" height="970" fill="#F3F8FB"/><clipPath id="cm2"><circle cx="537" cy="548" r="432"/></clipPath><g clip-path="url(#cm2)"><rect x="100" y="110" width="880" height="640" fill="#56677D"/><rect x="300" y="382" width="338" height="330" rx="45" fill="#262B30"/><path d="M330 420q60-20 105 0l35 60l40-60q70-10 100 50l25 250h-360l15-200q5-70 40-100z" fill="#33A5A6"/><path d="M425 418h120l-30 120l-45 55l-35-60z" fill="#fff"/><path d="M425 418l-8 40l55 135l-30-130z" fill="#C5C9CC"/><path d="M545 418l10 45l-75 125l40-130z" fill="#B4B8BC"/><path d="M462 440h26l6 110l-20 35l-18-35z" fill="#F26B43"/><path d="M440 380h70v45l-38 22l-32-22z" fill="#E3BE9C"/><path d="M395 585l220-15v75l-145 12l-5 45h-110l10-100z" fill="#2A8788"/><path d="M300 575q40-45 75-25l30 40l-10 40q-60 10-95-55z" fill="#F2D3B3"/><ellipse cx="470" cy="305" rx="82" ry="98" fill="#F2D3B3"/><path d="M470 207a82 98 0 0 0 0 196z" fill="#E6C3A1"/><path d="M385 300q-15-110 70-140q95-20 108 70l-8 60q-10-60-35-70q-60 20-110 0q-20 30-25 80z" fill="#23262B"/><path d="M285 560q10-130 60-160l40 20l10 90l-40 90z" fill="#33A5A6"/><path d="M335 340q20-40 50-20l15 60l-20 40l-45-20z" fill="#F2D3B3"/><path d="M345 262q25-15 40 5l-10 50l50 70q10 30-15 40q-30-10-40-40l-20-70q-20-30-5-55z" fill="#F4602F"/><path d="M408 440q-10 40-10 70q-25 30-15 70q-30 30-50 80" fill="none" stroke="#F4602F" stroke-width="16" stroke-dasharray="14 8"/><path d="M135 690q0-75 60-95l-15-30q20 10 35 25q20-5 40 0q15-15 35-25l-12 30q50 20 45 95z" fill="#F4602F"/><rect x="135" y="668" width="188" height="34" rx="8" fill="#E8552A"/><ellipse cx="230" cy="615" rx="36" ry="20" fill="#F7A58B"/><ellipse cx="230" cy="615" rx="18" ry="9" fill="#56677D"/><rect x="100" y="700" width="880" height="42" fill="#71808F"/><rect x="100" y="740" width="880" height="10" fill="#2C3844"/><rect x="100" y="748" width="880" height="260" fill="#3C4D5D"/><path d="M572 485l120 30l270 2l-40 60v45l8 10v70l-175 70l-150-50v-160z" fill="#F4F4F4"/><path d="M605 560l150 45l170-55M605 625l150 45l170-55M605 690l150 45l170-50" fill="none" stroke="#D2D2D2" stroke-width="14"/><path d="M572 485l120 30l270 2l-120 50l-200-10z" fill="#FFFFFF"/></g></svg>
<div class="a" style="left:15.80px;top:288.80px;width:633.00px;height:224.40px;background:#fff;"></div>
<div class="a" style="left:15.80px;top:288.80px;width:633.00px;height:18.80px;background:#E8E8E8;"></div>
<div class="a" style="left:15.80px;top:288.80px;width:19.60px;height:224.40px;background:#E8E8E8;"></div>
<div class="a" style="left:299.50px;top:290.00px;width:1.00px;height:17.00px;background:#C8C8C8;"></div>
<div class="a" style="left:427.30px;top:290.00px;width:1.00px;height:17.00px;background:#C8C8C8;"></div>
<div class="a" style="left:533.20px;top:290.00px;width:1.00px;height:17.00px;background:#C8C8C8;"></div>
<div class="a" style="left:639.80px;top:290.00px;width:1.00px;height:17.00px;background:#C8C8C8;"></div>
<svg class="a" style="left:23.3px;top:295.5px" width="12" height="12"><path d="M10.500 2v8.500h-8.500z" fill="#BDBDBD"/></svg>
<div class="t" style="left:164.30px;top:295.67px;font-size:10.20px;line-height:10.20px;color:#444;">A</div>
<div class="t" style="left:360.50px;top:295.67px;font-size:10.20px;line-height:10.20px;color:#444;">B</div>
<div class="t" style="left:477.07px;top:295.67px;font-size:10.20px;line-height:10.20px;color:#444;">C</div>
<div class="t" style="left:583.32px;top:295.67px;font-size:10.20px;line-height:10.20px;color:#444;">D</div>
<div class="a" style="left:35.40px;top:308.20px;width:604.90px;height:18.00px;background:#FF6600;"></div>
<div class="a" style="left:299.50px;top:308.20px;width:1.00px;height:18.00px;background:#FFB27A;"></div>
<div class="a" style="left:427.30px;top:308.20px;width:1.00px;height:18.00px;background:#FFB27A;"></div>
<div class="a" style="left:533.20px;top:308.20px;width:1.00px;height:18.00px;background:#FFB27A;"></div>
<div class="t" style="left:145.78px;top:310.45px;font-size:14.00px;line-height:14.00px;color:#fff;font-weight:bold;font-style:italic;transform:scaleX(0.9119);">Навык</div>
<div class="t" style="left:333.78px;top:310.45px;font-size:14.00px;line-height:14.00px;color:#fff;font-weight:bold;font-style:italic;transform:scaleX(0.8932);">Вакансия</div>
<div class="t" style="left:441.37px;top:310.45px;font-size:14.00px;line-height:14.00px;color:#fff;font-weight:bold;font-style:italic;transform:scaleX(0.9336);">Кандидат 1</div>
<div class="t" style="left:545.77px;top:310.45px;font-size:14.00px;line-height:14.00px;color:#fff;font-weight:bold;font-style:italic;transform:scaleX(0.9300);">Кандитат 2</div>
<div class="a" style="left:35.40px;top:326.60px;width:604.90px;height:16.32px;background:#F8CBAD;"></div>
<div class="a" style="left:35.40px;top:326.60px;width:604.90px;height:1.00px;background:#FCE8DC;"></div>
<div class="t" style="left:36.00px;top:329.83px;font-size:12.60px;line-height:12.60px;color:#333;transform:scaleX(0.9701);">Навыки устного и письменного общения</div>
<div class="a" style="left:301.00px;top:328.00px;width:87.22px;height:12.92px;background:linear-gradient(90deg,#FFB628 0%,#FFD27A 55%,#FFF0D2 100%);border:1px solid #FFC24B;box-sizing:border-box;"></div>
<div class="t" style="left:420.66px;top:330.99px;font-size:11.00px;line-height:11.00px;color:#222;font-weight:bold;transform:scaleX(0.8400);">7</div>
<div class="a" style="left:428.80px;top:328.00px;width:71.89px;height:12.92px;background:linear-gradient(90deg,#FFB628 0%,#FFD27A 55%,#FFF0D2 100%);border:1px solid #FFC24B;box-sizing:border-box;"></div>
<div class="t" style="left:526.56px;top:330.99px;font-size:11.00px;line-height:11.00px;color:#222;font-weight:bold;transform:scaleX(0.8400);">7</div>
<div class="a" style="left:534.70px;top:328.00px;width:103.40px;height:12.92px;background:linear-gradient(90deg,#FFB628 0%,#FFD27A 55%,#FFF0D2 100%);border:1px solid #FFC24B;box-sizing:border-box;"></div>
<div class="t" style="left:628.02px;top:330.99px;font-size:11.00px;line-height:11.00px;color:#222;font-weight:bold;transform:scaleX(0.8400);">10</div>
<div class="a" style="left:299.50px;top:326.60px;width:1.00px;height:16.32px;background:#FCE8DC;"></div>
<div class="a" style="left:427.30px;top:326.60px;width:1.00px;height:16.32px;background:#FCE8DC;"></div>
<div class="a" style="left:533.20px;top:326.60px;width:1.00px;height:16.32px;background:#FCE8DC;"></div>
<div class="a" style="left:35.40px;top:342.92px;width:604.90px;height:16.32px;background:#F8CBAD;"></div>
<div class="a" style="left:35.40px;top:342.92px;width:604.90px;height:1.00px;background:#FCE8DC;"></div>
<div class="t" style="left:36.00px;top:346.15px;font-size:12.60px;line-height:12.60px;color:#333;transform:scaleX(0.9663);">Навыки проведения презентаций</div>
<div class="a" style="left:301.00px;top:344.32px;width:87.22px;height:12.92px;background:linear-gradient(90deg,#FFB628 0%,#FFD27A 55%,#FFF0D2 100%);border:1px solid #FFC24B;box-sizing:border-box;"></div>
<div class="t" style="left:420.66px;top:347.31px;font-size:11.00px;line-height:11.00px;color:#222;font-weight:bold;transform:scaleX(0.8400);">7</div>
<div class="a" style="left:428.80px;top:344.32px;width:51.35px;height:12.92px;background:linear-gradient(90deg,#FFB628 0%,#FFD27A 55%,#FFF0D2 100%);border:1px solid #FFC24B;box-sizing:border-box;"></div>
<div class="t" style="left:526.56px;top:347.31px;font-size:11.00px;line-height:11.00px;color:#222;font-weight:bold;transform:scaleX(0.8400);">5</div>
<div class="a" style="left:534.70px;top:344.32px;width:31.02px;height:12.92px;background:linear-gradient(90deg,#FFB628 0%,#FFD27A 55%,#FFF0D2 100%);border:1px solid #FFC24B;box-sizing:border-box;"></div>
<div class="t" style="left:633.16px;top:347.31px;font-size:11.00px;line-height:11.00px;color:#222;font-weight:bold;transform:scaleX(0.8400);">3</div>
<div class="a" style="left:299.50px;top:342.92px;width:1.00px;height:16.32px;background:#FCE8DC;"></div>
<div class="a" style="left:427.30px;top:342.92px;width:1.00px;height:16.32px;background:#FCE8DC;"></div>
<div class="a" style="left:533.20px;top:342.92px;width:1.00px;height:16.32px;background:#FCE8DC;"></div>
<div class="a" style="left:35.40px;top:359.24px;width:604.90px;height:16.32px;background:#F8CBAD;"></div>
<div class="a" style="left:35.40px;top:359.24px;width:604.90px;height:1.00px;background:#FCE8DC;"></div>
<div class="t" style="left:36.60px;top:362.47px;font-size:12.60px;line-height:12.60px;color:#333;transform:scaleX(0.9604);">Знание/понимание английского</div>
<div class="a" style="left:301.00px;top:360.64px;width:62.30px;height:12.92px;background:linear-gradient(90deg,#FFB628 0%,#FFD27A 55%,#FFF0D2 100%);border:1px solid #FFC24B;box-sizing:border-box;"></div>
<div class="t" style="left:420.66px;top:363.63px;font-size:11.00px;line-height:11.00px;color:#222;font-weight:bold;transform:scaleX(0.8400);">5</div>
<div class="a" style="left:428.80px;top:360.64px;width:61.62px;height:12.92px;background:linear-gradient(90deg,#FFB628 0%,#FFD27A 55%,#FFF0D2 100%);border:1px solid #FFC24B;box-sizing:border-box;"></div>
<div class="t" style="left:526.56px;top:363.63px;font-size:11.00px;line-height:11.00px;color:#222;font-weight:bold;transform:scaleX(0.8400);">6</div>
<div class="a" style="left:534.70px;top:360.64px;width:72.38px;height:12.92px;background:linear-gradient(90deg,#FFB628 0%,#FFD27A 55%,#FFF0D2 100%);border:1px solid #FFC24B;box-sizing:border-box;"></div>
<div class="t" style="left:633.16px;top:363.63px;font-size:11.00px;line-height:11.00px;color:#222;font-weight:bold;transform:scaleX(0.8400);">7</div>
<div class="a" style="left:299.50px;top:359.24px;width:1.00px;height:16.32px;background:#FCE8DC;"></div>
<div class="a" style="left:427.30px;top:359.24px;width:1.00px;height:16.32px;background:#FCE8DC;"></div>
<div class="a" style="left:533.20px;top:359.24px;width:1.00px;height:16.32px;background:#FCE8DC;"></div>
<div class="a" style="left:35.40px;top:375.56px;width:604.90px;height:16.32px;background:#F8CBAD;"></div>
<div class="a" style="left:35.40px;top:375.56px;width:604.90px;height:1.00px;background:#FCE8DC;"></div>
<div class="t" style="left:36.60px;top:378.79px;font-size:12.60px;line-height:12.60px;color:#333;transform:scaleX(0.9751);">Знание технологии производства товаров</div>
<div class="a" style="left:301.00px;top:376.96px;width:24.92px;height:12.92px;background:linear-gradient(90deg,#FFB628 0%,#FFD27A 55%,#FFF0D2 100%);border:1px solid #FFC24B;box-sizing:border-box;"></div>
<div class="t" style="left:420.66px;top:379.95px;font-size:11.00px;line-height:11.00px;color:#222;font-weight:bold;transform:scaleX(0.8400);">2</div>
<div class="a" style="left:428.80px;top:376.96px;width:30.81px;height:12.92px;background:linear-gradient(90deg,#FFB628 0%,#FFD27A 55%,#FFF0D2 100%);border:1px solid #FFC24B;box-sizing:border-box;"></div>
<div class="t" style="left:526.56px;top:379.95px;font-size:11.00px;line-height:11.00px;color:#222;font-weight:bold;transform:scaleX(0.8400);">3</div>
<div class="a" style="left:534.70px;top:376.96px;width:72.38px;height:12.92px;background:linear-gradient(90deg,#FFB628 0%,#FFD27A 55%,#FFF0D2 100%);border:1px solid #FFC24B;box-sizing:border-box;"></div>
<div class="t" style="left:633.16px;top:379.95px;font-size:11.00px;line-height:11.00px;color:#222;font-weight:bold;transform:scaleX(0.8400);">7</div>
<div class="a" style="left:299.50px;top:375.56px;width:1.00px;height:16.32px;background:#FCE8DC;"></div>
<div class="a" style="left:427.30px;top:375.56px;width:1.00px;height:16.32px;background:#FCE8DC;"></div>
<div class="a" style="left:533.20px;top:375.56px;width:1.00px;height:16.32px;background:#FCE8DC;"></div>
<div class="a" style="left:35.40px;top:391.88px;width:604.90px;height:16.32px;background:#F8CBAD;"></div>
<div class="a" style="left:35.40px;top:391.88px;width:604.90px;height:1.00px;background:#FCE8DC;"></div>
<div class="t" style="left:36.60px;top:395.11px;font-size:12.60px;line-height:12.60px;color:#333;transform:scaleX(0.9717);">Знание финансов и бухгалтерии</div>
<div class="a" style="left:301.00px;top:393.28px;width:62.30px;height:12.92px;background:linear-gradient(90deg,#FFB628 0%,#FFD27A 55%,#FFF0D2 100%);border:1px solid #FFC24B;box-sizing:border-box;"></div>
<div class="t" style="left:420.66px;top:396.27px;font-size:11.00px;line-height:11.00px;color:#222;font-weight:bold;transform:scaleX(0.8400);">5</div>
<div class="a" style="left:428.80px;top:393.28px;width:51.35px;height:12.92px;background:linear-gradient(90deg,#FFB628 0%,#FFD27A 55%,#FFF0D2 100%);border:1px solid #FFC24B;box-sizing:border-box;"></div>
<div class="t" style="left:526.56px;top:396.27px;font-size:11.00px;line-height:11.00px;color:#222;font-weight:bold;transform:scaleX(0.8400);">5</div>
<div class="a" style="left:534.70px;top:393.28px;width:82.72px;height:12.92px;background:linear-gradient(90deg,#FFB628 0%,#FFD27A 55%,#FFF0D2 100%);border:1px solid #FFC24B;box-sizing:border-box;"></div>
<div class="t" style="left:633.16px;top:396.27px;font-size:11.00px;line-height:11.00px;color:#222;font-weight:bold;transform:scaleX(0.8400);">8</div>
<div class="a" style="left:299.50px;top:391.88px;width:1.00px;height:16.32px;background:#FCE8DC;"></div>
<div class="a" style="left:427.30px;top:391.88px;width:1.00px;height:16.32px;background:#FCE8DC;"></div>
<div class="a" style="left:533.20px;top:391.88px;width:1.00px;height:16.32px;background:#FCE8DC;"></div>
<div class="a" style="left:35.40px;top:408.20px;width:604.90px;height:16.32px;background:#F8CBAD;"></div>
<div class="a" style="left:35.40px;top:408.20px;width:604.90px;height:1.00px;background:#FCE8DC;"></div>
<div class="t" style="left:36.60px;top:411.43px;font-size:12.60px;line-height:12.60px;color:#333;transform:scaleX(0.9656);">Знание компьютера и ПО</div>
<div class="a" style="left:301.00px;top:409.60px;width:49.84px;height:12.92px;background:linear-gradient(90deg,#FFB628 0%,#FFD27A 55%,#FFF0D2 100%);border:1px solid #FFC24B;box-sizing:border-box;"></div>
<div class="t" style="left:420.66px;top:412.59px;font-size:11.00px;line-height:11.00px;color:#222;font-weight:bold;transform:scaleX(0.8400);">4</div>
<div class="a" style="left:428.80px;top:409.60px;width:30.81px;height:12.92px;background:linear-gradient(90deg,#FFB628 0%,#FFD27A 55%,#FFF0D2 100%);border:1px solid #FFC24B;box-sizing:border-box;"></div>
<div class="t" style="left:526.56px;top:412.59px;font-size:11.00px;line-height:11.00px;color:#222;font-weight:bold;transform:scaleX(0.8400);">3</div>
<div class="a" style="left:534.70px;top:409.60px;width:62.04px;height:12.92px;background:linear-gradient(90deg,#FFB628 0%,#FFD27A 55%,#FFF0D2 100%);border:1px solid #FFC24B;box-sizing:border-box;"></div>
<div class="t" style="left:633.16px;top:412.59px;font-size:11.00px;line-height:11.00px;color:#222;font-weight:bold;transform:scaleX(0.8400);">6</div>
<div class="a" style="left:299.50px;top:408.20px;width:1.00px;height:16.32px;background:#FCE8DC;"></div>
<div class="a" style="left:427.30px;top:408.20px;width:1.00px;height:16.32px;background:#FCE8DC;"></div>
<div class="a" style="left:533.20px;top:408.20px;width:1.00px;height:16.32px;background:#FCE8DC;"></div>
<div class="a" style="left:35.40px;top:424.52px;width:604.90px;height:16.32px;background:#F8CBAD;"></div>
<div class="a" style="left:35.40px;top:424.52px;width:604.90px;height:1.00px;background:#FCE8DC;"></div>
<div class="t" style="left:36.98px;top:427.75px;font-size:12.60px;line-height:12.60px;color:#333;transform:scaleX(0.9750);">Аналетические способности</div>
<div class="a" style="left:301.00px;top:425.92px;width:62.30px;height:12.92px;background:linear-gradient(90deg,#FFB628 0%,#FFD27A 55%,#FFF0D2 100%);border:1px solid #FFC24B;box-sizing:border-box;"></div>
<div class="t" style="left:420.66px;top:428.91px;font-size:11.00px;line-height:11.00px;color:#222;font-weight:bold;transform:scaleX(0.8400);">5</div>
<div class="a" style="left:428.80px;top:425.92px;width:71.89px;height:12.92px;background:linear-gradient(90deg,#FFB628 0%,#FFD27A 55%,#FFF0D2 100%);border:1px solid #FFC24B;box-sizing:border-box;"></div>
<div class="t" style="left:526.56px;top:428.91px;font-size:11.00px;line-height:11.00px;color:#222;font-weight:bold;transform:scaleX(0.8400);">7</div>
<div class="a" style="left:534.70px;top:425.92px;width:93.06px;height:12.92px;background:linear-gradient(90deg,#FFB628 0%,#FFD27A 55%,#FFF0D2 100%);border:1px solid #FFC24B;box-sizing:border-box;"></div>
<div class="t" style="left:633.16px;top:428.91px;font-size:11.00px;line-height:11.00px;color:#222;font-weight:bold;transform:scaleX(0.8400);">9</div>
<div class="a" style="left:299.50px;top:424.52px;width:1.00px;height:16.32px;background:#FCE8DC;"></div>
<div class="a" style="left:427.30px;top:424.52px;width:1.00px;height:16.32px;background:#FCE8DC;"></div>
<div class="a" style="left:533.20px;top:424.52px;width:1.00px;height:16.32px;background:#FCE8DC;"></div>
<div class="a" style="left:35.40px;top:440.84px;width:604.90px;height:16.32px;background:#F8CBAD;"></div>
<div class="a" style="left:35.40px;top:440.84px;width:604.90px;height:1.00px;background:#FCE8DC;"></div>
<div class="t" style="left:36.89px;top:444.07px;font-size:12.60px;line-height:12.60px;color:#333;transform:scaleX(0.9728);">Лидерские навыки</div>
<div class="a" style="left:301.00px;top:442.24px;width:99.68px;height:12.92px;background:linear-gradient(90deg,#FFB628 0%,#FFD27A 55%,#FFF0D2 100%);border:1px solid #FFC24B;box-sizing:border-box;"></div>
<div class="t" style="left:420.66px;top:445.23px;font-size:11.00px;line-height:11.00px;color:#222;font-weight:bold;transform:scaleX(0.8400);">8</div>
<div class="a" style="left:428.80px;top:442.24px;width:92.43px;height:12.92px;background:linear-gradient(90deg,#FFB628 0%,#FFD27A 55%,#FFF0D2 100%);border:1px solid #FFC24B;box-sizing:border-box;"></div>
<div class="t" style="left:526.56px;top:445.23px;font-size:11.00px;line-height:11.00px;color:#222;font-weight:bold;transform:scaleX(0.8400);">9</div>
<div class="a" style="left:534.70px;top:442.24px;width:82.72px;height:12.92px;background:linear-gradient(90deg,#FFB628 0%,#FFD27A 55%,#FFF0D2 100%);border:1px solid #FFC24B;box-sizing:border-box;"></div>
<div class="t" style="left:633.16px;top:445.23px;font-size:11.00px;line-height:11.00px;color:#222;font-weight:bold;transform:scaleX(0.8400);">8</div>
<div class="a" style="left:299.50px;top:440.84px;width:1.00px;height:16.32px;background:#FCE8DC;"></div>
<div class="a" style="left:427.30px;top:440.84px;width:1.00px;height:16.32px;background:#FCE8DC;"></div>
<div class="a" style="left:533.20px;top:440.84px;width:1.00px;height:16.32px;background:#FCE8DC;"></div>
<div class="a" style="left:35.40px;top:457.16px;width:604.90px;height:16.32px;background:#F8CBAD;"></div>
<div class="a" style="left:35.40px;top:457.16px;width:604.90px;height:1.00px;background:#FCE8DC;"></div>
<div class="t" style="left:35.98px;top:460.39px;font-size:12.60px;line-height:12.60px;color:#333;transform:scaleX(0.9844);">Ведение переговоров</div>
<div class="a" style="left:301.00px;top:458.56px;width:99.68px;height:12.92px;background:linear-gradient(90deg,#FFB628 0%,#FFD27A 55%,#FFF0D2 100%);border:1px solid #FFC24B;box-sizing:border-box;"></div>
<div class="t" style="left:420.66px;top:461.55px;font-size:11.00px;line-height:11.00px;color:#222;font-weight:bold;transform:scaleX(0.8400);">8</div>
<div class="a" style="left:428.80px;top:458.56px;width:71.89px;height:12.92px;background:linear-gradient(90deg,#FFB628 0%,#FFD27A 55%,#FFF0D2 100%);border:1px solid #FFC24B;box-sizing:border-box;"></div>
<div class="t" style="left:526.56px;top:461.55px;font-size:11.00px;line-height:11.00px;color:#222;font-weight:bold;transform:scaleX(0.8400);">7</div>
<div class="a" style="left:534.70px;top:458.56px;width:31.02px;height:12.92px;background:linear-gradient(90deg,#FFB628 0%,#FFD27A 55%,#FFF0D2 100%);border:1px solid #FFC24B;box-sizing:border-box;"></div>
<div class="t" style="left:633.16px;top:461.55px;font-size:11.00px;line-height:11.00px;color:#222;font-weight:bold;transform:scaleX(0.8400);">3</div>
<div class="a" style="left:299.50px;top:457.16px;width:1.00px;height:16.32px;background:#FCE8DC;"></div>
<div class="a" style="left:427.30px;top:457.16px;width:1.00px;height:16.32px;background:#FCE8DC;"></div>
<div class="a" style="left:533.20px;top:457.16px;width:1.00px;height:16.32px;background:#FCE8DC;"></div>
<div class="a" style="left:35.40px;top:473.60px;width:613.40px;height:1.00px;background:#EAEAEA;"></div>
<div class="a" style="left:35.40px;top:486.40px;width:613.40px;height:1.00px;background:#EAEAEA;"></div>
<div class="a" style="left:35.40px;top:501.60px;width:613.40px;height:1.00px;background:#EAEAEA;"></div>
<div class="a" style="left:299.50px;top:473.60px;width:1.00px;height:40.00px;background:#EAEAEA;"></div>
<div class="a" style="left:427.30px;top:473.60px;width:1.00px;height:40.00px;background:#EAEAEA;"></div>
<div class="a" style="left:533.20px;top:473.60px;width:1.00px;height:40.00px;background:#EAEAEA;"></div>
<div class="a" style="left:639.80px;top:473.60px;width:1.00px;height:40.00px;background:#EAEAEA;"></div>
<div class="a" style="left:640.80px;top:342.42px;width:8.00px;height:1.00px;background:#E4E4E4;"></div>
<div class="a" style="left:640.80px;top:358.74px;width:8.00px;height:1.00px;background:#E4E4E4;"></div>
<div class="a" style="left:640.80px;top:375.06px;width:8.00px;height:1.00px;background:#E4E4E4;"></div>
<div class="a" style="left:640.80px;top:391.38px;width:8.00px;height:1.00px;background:#E4E4E4;"></div>
<div class="a" style="left:640.80px;top:407.70px;width:8.00px;height:1.00px;background:#E4E4E4;"></div>
<div class="a" style="left:640.80px;top:424.02px;width:8.00px;height:1.00px;background:#E4E4E4;"></div>
<div class="a" style="left:640.80px;top:440.34px;width:8.00px;height:1.00px;background:#E4E4E4;"></div>
<div class="a" style="left:640.80px;top:456.66px;width:8.00px;height:1.00px;background:#E4E4E4;"></div>
<div class="a" style="left:640.80px;top:472.98px;width:8.00px;height:1.00px;background:#E4E4E4;"></div>
<div class="a" style="left:640.80px;top:308.00px;width:8.00px;height:1.00px;background:#E4E4E4;"></div>
<div class="t" style="left:23.00px;top:314.80px;font-size:10.40px;line-height:10.40px;color:#444;transform:scaleX(0.9000);">1</div>
<div class="t" style="left:23.00px;top:331.10px;font-size:10.40px;line-height:10.40px;color:#444;transform:scaleX(0.9000);">2</div>
<div class="t" style="left:23.00px;top:347.40px;font-size:10.40px;line-height:10.40px;color:#444;transform:scaleX(0.9000);">3</div>
<div class="t" style="left:23.00px;top:363.80px;font-size:10.40px;line-height:10.40px;color:#444;transform:scaleX(0.9000);">4</div>
<div class="t" style="left:23.00px;top:380.00px;font-size:10.40px;line-height:10.40px;color:#444;transform:scaleX(0.9000);">5</div>
<div class="t" style="left:23.00px;top:396.40px;font-size:10.40px;line-height:10.40px;color:#444;transform:scaleX(0.9000);">6</div>
<div class="t" style="left:23.00px;top:412.70px;font-size:10.40px;line-height:10.40px;color:#444;transform:scaleX(0.9000);">7</div>
<div class="t" style="left:23.00px;top:429.00px;font-size:10.40px;line-height:10.40px;color:#444;transform:scaleX(0.9000);">8</div>
<div class="t" style="left:23.00px;top:445.40px;font-size:10.40px;line-height:10.40px;color:#444;transform:scaleX(0.9000);">9</div>
<div class="t" style="left:20.30px;top:461.70px;font-size:10.40px;line-height:10.40px;color:#444;transform:scaleX(0.9000);">10</div>
<div class="t" style="left:20.30px;top:476.30px;font-size:10.40px;line-height:10.40px;color:#444;transform:scaleX(0.9000);">11</div>
<div class="t" style="left:20.30px;top:490.60px;font-size:10.40px;line-height:10.40px;color:#444;transform:scaleX(0.9000);">12</div>
<div class="t" style="left:20.30px;top:504.30px;font-size:10.40px;line-height:10.40px;color:#444;transform:scaleX(0.9000);">13</div>
<div class="a" style="left:16.50px;top:307.70px;width:18.50px;height:1.00px;background:#CFCFCF;"></div>
<div class="a" style="left:16.50px;top:326.10px;width:18.50px;height:1.00px;background:#CFCFCF;"></div>
<div class="a" style="left:16.50px;top:342.42px;width:18.50px;height:1.00px;background:#CFCFCF;"></div>
<div class="a" style="left:16.50px;top:358.74px;width:18.50px;height:1.00px;background:#CFCFCF;"></div>
<div class="a" style="left:16.50px;top:375.06px;width:18.50px;height:1.00px;background:#CFCFCF;"></div>
<div class="a" style="left:16.50px;top:391.38px;width:18.50px;height:1.00px;background:#CFCFCF;"></div>
<div class="a" style="left:16.50px;top:407.70px;width:18.50px;height:1.00px;background:#CFCFCF;"></div>
<div class="a" style="left:16.50px;top:424.02px;width:18.50px;height:1.00px;background:#CFCFCF;"></div>
<div class="a" style="left:16.50px;top:440.34px;width:18.50px;height:1.00px;background:#CFCFCF;"></div>
<div class="a" style="left:16.50px;top:456.66px;width:18.50px;height:1.00px;background:#CFCFCF;"></div>
<div class="a" style="left:16.50px;top:472.98px;width:18.50px;height:1.00px;background:#CFCFCF;"></div>
<div class="a" style="left:16.50px;top:485.90px;width:18.50px;height:1.00px;background:#CFCFCF;"></div>
<div class="a" style="left:16.50px;top:501.10px;width:18.50px;height:1.00px;background:#CFCFCF;"></div>
<div class="a" style="left:16.50px;top:473.10px;width:18.50px;height:1.00px;background:#CFCFCF;"></div>
<div class="a" style="left:427.80px;top:487.00px;width:105.90px;height:14.40px;background:#63BE7B;"></div>
<div class="a" style="left:533.70px;top:487.00px;width:106.60px;height:14.40px;background:#F8696B;"></div>
<div class="t" style="left:302.43px;top:489.47px;font-size:9.60px;line-height:9.60px;color:#111;font-weight:bold;transform:scaleX(0.9483);">Соответствие должности</div>
<div class="t" style="left:514.08px;top:488.46px;font-size:10.80px;line-height:10.80px;color:#1E4D2B;transform:scaleX(0.8347);">92%</div>
<div class="t" style="left:620.61px;top:488.46px;font-size:10.80px;line-height:10.80px;color:#6B1A1C;transform:scaleX(0.8381);">82%</div>
<svg class="a" style="left:649px;top:432px" width="460" height="350" viewBox="1200 600 460 350"><path d="M1200 614.500h436" stroke="#DDE3EA" stroke-width="1.300"/><path d="M1206.5 608.500v6" stroke="#DDE3EA" stroke-width="1.200"/><path d="M1265.5 608.500v6" stroke="#DDE3EA" stroke-width="1.200"/><path d="M1324.2 608.500v6" stroke="#DDE3EA" stroke-width="1.200"/><path d="M1383.1 608.500v6" stroke="#DDE3EA" stroke-width="1.200"/><path d="M1442.0 608.500v6" stroke="#DDE3EA" stroke-width="1.200"/><path d="M1500.2 608.500v6" stroke="#DDE3EA" stroke-width="1.200"/><path d="M1559.5 608.500v6" stroke="#DDE3EA" stroke-width="1.200"/><path d="M1618.3 608.500v6" stroke="#DDE3EA" stroke-width="1.200"/><polygon points="1423.5,777.6 1432.1,780.7 1436.7,788.7 1435.1,797.7 1428.1,803.6 1418.9,803.6 1411.9,797.7 1410.3,788.7 1414.9,780.7" fill="none" stroke="#E9EBF0" stroke-width="0.8"/><polygon points="1423.5,764.2 1440.7,770.5 1449.9,786.3 1446.7,804.4 1432.7,816.2 1414.3,816.2 1400.3,804.4 1397.1,786.3 1406.3,770.5" fill="none" stroke="#E9EBF0" stroke-width="0.8"/><polygon points="1423.5,750.8 1449.3,760.2 1463.1,784.0 1458.3,811.1 1437.2,828.8 1409.8,828.8 1388.7,811.1 1383.9,784.0 1397.7,760.2" fill="none" stroke="#E9EBF0" stroke-width="0.8"/><polygon points="1423.5,737.4 1458.0,749.9 1476.3,781.7 1469.9,817.8 1441.8,841.4 1405.2,841.4 1377.1,817.8 1370.7,781.7 1389.0,749.9" fill="none" stroke="#E9EBF0" stroke-width="0.8"/><polygon points="1423.5,724.0 1466.6,739.7 1489.5,779.4 1481.5,824.5 1446.4,854.0 1400.6,854.0 1365.5,824.5 1357.5,779.4 1380.4,739.7" fill="none" stroke="#E9EBF0" stroke-width="0.8"/><polygon points="1423.5,744.1 1453.6,755.1 1456.5,785.2 1435.1,797.7 1435.0,822.5 1414.3,816.2 1394.5,807.8 1370.7,781.7 1389.0,749.9" fill="none" stroke="#FFCC4D" stroke-width="2.6" stroke-linejoin="round"/><polygon points="1423.5,744.1 1445.0,765.3 1463.1,784.0 1440.9,801.0 1435.0,822.5 1416.6,809.9 1382.9,814.5 1364.1,780.5 1393.4,755.1" fill="none" stroke="#F5360F" stroke-width="2.6" stroke-linejoin="round"/><polygon points="1423.5,724.0 1436.4,775.6 1469.7,782.9 1464.1,814.5 1441.8,841.4 1409.8,828.8 1371.3,821.1 1370.7,781.7 1410.6,775.6" fill="none" stroke="#0FA34D" stroke-width="2.6" stroke-linejoin="round"/><path d="M1298.2 919h24" stroke="#FFCC4D" stroke-width="2.6"/><path d="M1382 919h24.2" stroke="#F5360F" stroke-width="2.6"/><path d="M1475.8 919h24.2" stroke="#0FA34D" stroke-width="2.6"/></svg>
<div class="t" style="left:671.00px;top:463.69px;font-size:17.50px;line-height:17.50px;color:#3E4D66;font-weight:bold;transform:scaleX(0.9733);">Сравнение требований к должности и навыков</div>
<div class="t" style="left:819.79px;top:487.29px;font-size:17.50px;line-height:17.50px;color:#3E4D66;font-weight:bold;transform:scaleX(0.9974);">кандидатов</div>
<div class="t" style="left:850.81px;top:550.53px;font-size:10.60px;line-height:10.60px;color:#5A6678;">10</div>
<div class="t" style="left:856.70px;top:564.03px;font-size:10.60px;line-height:10.60px;color:#5A6678;">8</div>
<div class="t" style="left:856.70px;top:577.33px;font-size:10.60px;line-height:10.60px;color:#5A6678;">6</div>
<div class="t" style="left:856.70px;top:590.63px;font-size:10.60px;line-height:10.60px;color:#5A6678;">4</div>
<div class="t" style="left:856.70px;top:604.53px;font-size:10.60px;line-height:10.60px;color:#5A6678;">2</div>
<div class="t" style="left:856.70px;top:618.03px;font-size:10.60px;line-height:10.60px;color:#5A6678;">0</div>
<div class="t" style="left:830.36px;top:526.33px;font-size:10.60px;line-height:10.60px;color:#44546A;font-weight:bold;transform:scaleX(0.8997);">Навыки устного и</div>
<div class="t" style="left:817.72px;top:539.53px;font-size:10.60px;line-height:10.60px;color:#44546A;font-weight:bold;transform:scaleX(0.9215);">письменного общения</div>
<div class="t" style="left:916.95px;top:556.23px;font-size:10.60px;line-height:10.60px;color:#44546A;font-weight:bold;transform:scaleX(0.9197);">Навыки проведения</div>
<div class="t" style="left:934.20px;top:569.43px;font-size:10.60px;line-height:10.60px;color:#44546A;font-weight:bold;transform:scaleX(0.9486);">презентаций</div>
<div class="t" style="left:940.97px;top:598.73px;font-size:10.60px;line-height:10.60px;color:#44546A;font-weight:bold;transform:scaleX(0.9511);">Знание/понимание</div>
<div class="t" style="left:958.72px;top:612.03px;font-size:10.60px;line-height:10.60px;color:#44546A;font-weight:bold;transform:scaleX(0.9157);">английского</div>
<div class="t" style="left:939.98px;top:645.03px;font-size:10.60px;line-height:10.60px;color:#44546A;font-weight:bold;transform:scaleX(0.9228);">Знание технологии</div>
<div class="t" style="left:932.64px;top:658.53px;font-size:10.60px;line-height:10.60px;color:#44546A;font-weight:bold;transform:scaleX(0.8927);">производства товаров</div>
<div class="t" style="left:896.59px;top:676.53px;font-size:10.60px;line-height:10.60px;color:#44546A;font-weight:bold;transform:scaleX(0.8931);">Знание финансов и</div>
<div class="t" style="left:912.46px;top:689.53px;font-size:10.60px;line-height:10.60px;color:#44546A;font-weight:bold;transform:scaleX(0.9082);">бухгалтерии</div>
<div class="t" style="left:741.08px;top:676.53px;font-size:10.60px;line-height:10.60px;color:#44546A;font-weight:bold;transform:scaleX(0.9191);">Знание компьютера и</div>
<div class="t" style="left:784.62px;top:689.53px;font-size:10.60px;line-height:10.60px;color:#44546A;font-weight:bold;transform:scaleX(0.9653);">ПО</div>
<div class="t" style="left:739.46px;top:645.03px;font-size:10.60px;line-height:10.60px;color:#44546A;font-weight:bold;transform:scaleX(0.9137);">Аналетические</div>
<div class="t" style="left:745.63px;top:658.53px;font-size:10.60px;line-height:10.60px;color:#44546A;font-weight:bold;transform:scaleX(0.8915);">способности</div>
<div class="t" style="left:712.86px;top:604.73px;font-size:10.60px;line-height:10.60px;color:#44546A;font-weight:bold;transform:scaleX(0.9175);">Лидерские навыки</div>
<div class="t" style="left:722.35px;top:563.73px;font-size:10.60px;line-height:10.60px;color:#44546A;font-weight:bold;transform:scaleX(0.9123);">Ведение переговоров</div>
<div class="t" style="left:773.18px;top:745.03px;font-size:10.60px;line-height:10.60px;color:#44546A;transform:scaleX(0.9390);">Вакансия</div>
<div class="t" style="left:856.15px;top:745.03px;font-size:10.60px;line-height:10.60px;color:#44546A;transform:scaleX(0.9726);">Кандидат 1</div>
<div class="t" style="left:949.76px;top:745.03px;font-size:10.60px;line-height:10.60px;color:#44546A;transform:scaleX(0.9673);">Кандитат 2</div>
</div>
<div class="t" style="left:45.53px;top:729.36px;font-size:13.40px;line-height:13.40px;color:#000;font-weight:bold;transform:scaleX(1.0782);-webkit-text-stroke:0.45px #000;">Результаты работы</div>
<div class="t" style="left:45.64px;top:922.86px;font-size:13.40px;line-height:13.40px;color:#000;font-weight:bold;transform:scaleX(1.0751);-webkit-text-stroke:0.45px #000;">Результаты работы</div>
<svg class="a" style="left:0.00px;top:0.00px;" width="278" height="1080" viewBox="0 0 278 1080"><polygon points="82.93,153.34 81.98,152.23 80.96,151.20 79.86,150.24 78.70,149.35 77.48,148.55 76.20,147.83 74.85,147.28 73.45,146.84 72.04,146.50 70.60,146.27 69.16,146.13 67.72,146.10 66.29,146.24 64.88,146.55 63.52,146.96 62.20,147.46 60.94,148.05 59.73,148.72 58.59,149.46 57.52,150.28 56.52,151.16 55.59,152.10 54.86,153.22 54.27,154.41 53.79,155.62 53.41,156.83 53.14,158.04 52.97,159.24 52.89,160.42 52.83,161.54 52.82,162.63 52.90,163.70 53.05,164.74 53.28,165.74 53.57,166.70 53.94,167.61 54.36,168.48 54.79,169.29 55.23,170.07 55.72,170.80 56.26,171.48 56.83,172.11 57.28,172.54 57.04,171.78 56.86,171.01 56.73,170.24 56.66,169.47 56.65,168.71 56.58,167.98 56.51,167.25 56.50,166.52 56.54,165.78 56.63,165.06 56.77,164.34 56.89,163.61 56.99,162.86 57.14,162.10 57.35,161.35 57.62,160.61 57.95,159.88 58.31,159.14 58.65,158.35 59.07,157.57 59.55,156.81 60.10,156.08 60.72,155.36 61.39,154.67 62.13,154.03 62.94,153.42 63.81,152.87 64.73,152.38 65.71,151.95 66.74,151.59 67.81,151.31 68.92,151.07 70.08,150.85 71.28,150.71 72.52,150.67 73.78,150.72 75.06,150.88 76.37,151.10 77.75,151.35 79.14,151.71 80.53,152.19 81.91,152.80" fill="#46296E"/><polygon points="70.61,187.17 72.04,186.91 73.45,186.54 74.83,186.07 76.17,185.51 77.48,184.85 78.74,184.10 79.90,183.21 80.97,182.22 81.97,181.16 82.89,180.04 83.73,178.86 84.48,177.62 85.08,176.31 85.51,174.94 85.83,173.55 86.06,172.16 86.18,170.78 86.21,169.40 86.13,168.04 85.96,166.70 85.70,165.39 85.35,164.12 84.75,162.93 84.01,161.82 83.20,160.80 82.34,159.87 81.43,159.03 80.48,158.28 79.49,157.62 78.55,157.01 77.61,156.45 76.65,155.98 75.67,155.60 74.69,155.29 73.71,155.07 72.74,154.93 71.78,154.86 70.86,154.83 69.96,154.82 69.08,154.88 68.23,155.00 67.40,155.19 66.80,155.36 67.59,155.54 68.34,155.76 69.07,156.04 69.77,156.36 70.43,156.73 71.10,157.03 71.77,157.34 72.41,157.70 73.02,158.10 73.61,158.54 74.16,159.02 74.73,159.49 75.34,159.95 75.91,160.46 76.45,161.02 76.96,161.62 77.43,162.27 77.89,162.95 78.40,163.64 78.87,164.39 79.29,165.19 79.65,166.04 79.96,166.93 80.22,167.86 80.41,168.82 80.53,169.82 80.57,170.85 80.53,171.89 80.42,172.96 80.21,174.02 79.93,175.10 79.58,176.18 79.19,177.29 78.70,178.40 78.12,179.49 77.44,180.56 76.67,181.59 75.82,182.62 74.92,183.69 73.91,184.71 72.80,185.67 71.58,186.56" fill="#46296E"/><polygon points="47.46,159.59 46.98,160.96 46.60,162.36 46.31,163.79 46.13,165.24 46.04,166.70 46.06,168.16 46.25,169.62 46.57,171.04 46.99,172.44 47.50,173.80 48.11,175.11 48.80,176.38 49.64,177.55 50.61,178.61 51.65,179.58 52.74,180.47 53.88,181.27 55.06,181.98 56.27,182.60 57.52,183.12 58.78,183.55 60.06,183.88 61.39,183.95 62.72,183.87 64.01,183.68 65.24,183.40 66.43,183.03 67.55,182.58 68.61,182.06 69.62,181.55 70.57,181.01 71.46,180.41 72.28,179.76 73.03,179.07 73.71,178.33 74.32,177.56 74.86,176.76 75.35,175.97 75.80,175.20 76.19,174.41 76.51,173.61 76.77,172.80 76.92,172.20 76.38,172.79 75.80,173.33 75.20,173.82 74.57,174.27 73.91,174.65 73.32,175.09 72.72,175.51 72.09,175.88 71.44,176.22 70.76,176.50 70.07,176.74 69.38,177.00 68.68,177.29 67.95,177.54 67.19,177.73 66.41,177.87 65.62,177.95 64.80,178.01 63.94,178.10 63.06,178.13 62.16,178.09 61.25,177.99 60.32,177.81 59.39,177.57 58.46,177.25 57.53,176.85 56.62,176.38 55.73,175.82 54.87,175.19 54.05,174.48 53.27,173.70 52.51,172.85 51.73,171.96 51.01,170.98 50.36,169.93 49.77,168.82 49.27,167.63 48.81,166.38 48.33,165.07 47.95,163.68 47.67,162.24 47.51,160.74" fill="#46296E"/><circle cx="67.00" cy="166.70" r="8.40" fill="#FF1F93"/><polygon points="85.40,342.98 84.33,341.74 83.18,340.58 81.95,339.50 80.65,338.51 79.28,337.60 77.84,336.80 76.32,336.17 74.75,335.68 73.16,335.30 71.55,335.04 69.93,334.89 68.31,334.85 66.70,335.01 65.12,335.36 63.59,335.82 62.11,336.38 60.69,337.04 59.33,337.79 58.05,338.63 56.84,339.54 55.72,340.53 54.68,341.59 53.86,342.85 53.20,344.19 52.66,345.54 52.23,346.91 51.92,348.27 51.73,349.62 51.65,350.94 51.57,352.20 51.56,353.43 51.65,354.63 51.82,355.80 52.08,356.92 52.41,358.00 52.82,359.03 53.29,360.00 53.78,360.92 54.28,361.79 54.83,362.61 55.43,363.38 56.07,364.08 56.58,364.56 56.31,363.70 56.10,362.84 55.96,361.97 55.88,361.11 55.87,360.26 55.79,359.44 55.72,358.62 55.70,357.79 55.74,356.97 55.85,356.15 56.00,355.35 56.13,354.53 56.25,353.68 56.42,352.83 56.66,351.99 56.96,351.16 57.33,350.34 57.73,349.51 58.12,348.62 58.59,347.74 59.13,346.89 59.75,346.06 60.44,345.26 61.20,344.48 62.03,343.76 62.94,343.08 63.91,342.46 64.95,341.91 66.05,341.43 67.20,341.02 68.41,340.70 69.66,340.44 70.96,340.19 72.31,340.03 73.70,339.99 75.12,340.05 76.56,340.22 78.03,340.47 79.58,340.75 81.14,341.15 82.70,341.70 84.25,342.38" fill="#46296E"/><polygon points="71.56,381.01 73.16,380.71 74.74,380.29 76.29,379.77 77.81,379.14 79.28,378.40 80.69,377.56 81.99,376.55 83.20,375.44 84.33,374.25 85.36,372.99 86.30,371.66 87.15,370.28 87.81,368.80 88.30,367.26 88.66,365.70 88.92,364.14 89.06,362.58 89.08,361.03 89.00,359.50 88.81,358.00 88.52,356.53 88.13,355.10 87.44,353.76 86.61,352.52 85.71,351.37 84.74,350.32 83.72,349.38 82.65,348.54 81.54,347.80 80.48,347.11 79.42,346.48 78.34,345.96 77.25,345.52 76.15,345.18 75.04,344.93 73.95,344.77 72.87,344.70 71.83,344.66 70.83,344.65 69.84,344.72 68.88,344.86 67.95,345.06 67.28,345.26 68.16,345.45 69.01,345.71 69.83,346.02 70.61,346.38 71.36,346.80 72.11,347.14 72.86,347.49 73.58,347.89 74.27,348.33 74.93,348.83 75.55,349.37 76.19,349.89 76.87,350.41 77.51,350.99 78.12,351.62 78.70,352.30 79.22,353.02 79.74,353.79 80.31,354.57 80.84,355.41 81.31,356.30 81.72,357.26 82.07,358.25 82.36,359.30 82.57,360.39 82.70,361.51 82.75,362.66 82.71,363.84 82.58,365.03 82.35,366.23 82.03,367.44 81.63,368.65 81.20,369.91 80.65,371.15 80.00,372.38 79.24,373.58 78.37,374.74 77.41,375.89 76.40,377.09 75.27,378.24 74.02,379.32 72.65,380.32" fill="#46296E"/><polygon points="45.55,350.01 45.00,351.55 44.57,353.13 44.25,354.73 44.04,356.36 43.95,358.00 43.97,359.65 44.19,361.28 44.54,362.88 45.01,364.45 45.59,365.97 46.27,367.45 47.05,368.88 47.99,370.19 49.08,371.38 50.25,372.48 51.47,373.48 52.75,374.38 54.08,375.18 55.45,375.87 56.84,376.46 58.26,376.94 59.70,377.31 61.20,377.39 62.69,377.29 64.14,377.08 65.53,376.77 66.86,376.35 68.12,375.85 69.31,375.26 70.44,374.69 71.51,374.08 72.51,373.41 73.43,372.68 74.28,371.90 75.04,371.07 75.73,370.20 76.33,369.30 76.88,368.42 77.39,367.56 77.83,366.67 78.19,365.77 78.48,364.86 78.65,364.18 78.04,364.84 77.39,365.45 76.71,366.01 76.00,366.50 75.27,366.94 74.60,367.42 73.93,367.90 73.22,368.32 72.49,368.69 71.73,369.02 70.95,369.28 70.17,369.58 69.39,369.91 68.57,370.18 67.72,370.39 66.84,370.55 65.95,370.64 65.03,370.70 64.07,370.81 63.08,370.85 62.06,370.81 61.04,370.68 60.00,370.49 58.95,370.22 57.90,369.86 56.86,369.41 55.84,368.88 54.84,368.25 53.87,367.54 52.95,366.74 52.06,365.86 51.21,364.91 50.34,363.91 49.53,362.81 48.80,361.64 48.14,360.38 47.57,359.04 47.05,357.64 46.52,356.16 46.09,354.61 45.78,352.99 45.60,351.30" fill="#46296E"/><circle cx="67.50" cy="358.00" r="9.44" fill="#FF1F93"/><path d="M92.91 396.83H224.23" stroke="#D4D4D4" stroke-width="0.5"/><path d="M92.91 406.65H224.23" stroke="#D4D4D4" stroke-width="0.5"/><path d="M92.91 416.48H224.23" stroke="#D4D4D4" stroke-width="0.5"/><path d="M92.91 426.49H224.23" stroke="#D4D4D4" stroke-width="0.5"/><path d="M92.91 436.49H224.23" stroke="#D4D4D4" stroke-width="0.5"/><path d="M92.91 446.50H224.23" stroke="#D4D4D4" stroke-width="0.5"/><path d="M92.91 456.32H224.23" stroke="#D4D4D4" stroke-width="0.5"/><path d="M92.91 466.51H224.23" stroke="#D4D4D4" stroke-width="0.5"/><polyline points="97.91,419.52 108.99,424.52 120.06,419.16 131.32,416.48 142.40,426.49 153.48,415.59 164.55,425.41 175.63,418.80 186.71,412.55 197.78,410.23 208.50,413.26 219.40,401.29" fill="none" stroke="#5B9BD5" stroke-width="0.7"/><polyline points="97.37,420.41 125.07,420.41 132.21,421.84 160.80,420.05 185.81,416.48 201.89,411.12 219.40,403.08" fill="none" stroke="#E0443A" stroke-width="0.6" stroke-dasharray="0.7 0.7"/><text x="99.11" y="470.97" font-size="3.500" fill="#5A5A5A" text-anchor="end" transform="rotate(-45 99.11 470.97)">Январь</text><text x="110.15" y="470.97" font-size="3.500" fill="#5A5A5A" text-anchor="end" transform="rotate(-45 110.15 470.97)">Февраль</text><text x="121.19" y="470.97" font-size="3.500" fill="#5A5A5A" text-anchor="end" transform="rotate(-45 121.19 470.97)">Март</text><text x="132.23" y="470.97" font-size="3.500" fill="#5A5A5A" text-anchor="end" transform="rotate(-45 132.23 470.97)">Апрель</text><text x="143.28" y="470.97" font-size="3.500" fill="#5A5A5A" text-anchor="end" transform="rotate(-45 143.28 470.97)">Май</text><text x="154.32" y="470.97" font-size="3.500" fill="#5A5A5A" text-anchor="end" transform="rotate(-45 154.32 470.97)">Июнь</text><text x="165.36" y="470.97" font-size="3.500" fill="#5A5A5A" text-anchor="end" transform="rotate(-45 165.36 470.97)">Июль</text><text x="176.40" y="470.97" font-size="3.500" fill="#5A5A5A" text-anchor="end" transform="rotate(-45 176.40 470.97)">Август</text><text x="187.44" y="470.97" font-size="3.500" fill="#5A5A5A" text-anchor="end" transform="rotate(-45 187.44 470.97)">Сентябрь</text><text x="198.48" y="470.97" font-size="3.500" fill="#5A5A5A" text-anchor="end" transform="rotate(-45 198.48 470.97)">Октябрь</text><text x="209.53" y="470.97" font-size="3.500" fill="#5A5A5A" text-anchor="end" transform="rotate(-45 209.53 470.97)">Ноябрь</text><text x="220.57" y="470.97" font-size="3.500" fill="#5A5A5A" text-anchor="end" transform="rotate(-45 220.57 470.97)">Декабрь</text><text x="90.41" y="397.73" font-size="2.6" fill="#888" text-anchor="end">140</text><text x="90.41" y="407.55" font-size="2.6" fill="#888" text-anchor="end">120</text><text x="90.41" y="417.38" font-size="2.6" fill="#888" text-anchor="end">100</text><text x="90.41" y="427.39" font-size="2.6" fill="#888" text-anchor="end">80</text><text x="90.41" y="437.39" font-size="2.6" fill="#888" text-anchor="end">60</text><text x="90.41" y="447.40" font-size="2.6" fill="#888" text-anchor="end">40</text><text x="90.41" y="457.22" font-size="2.6" fill="#888" text-anchor="end">20</text><text x="90.41" y="467.41" font-size="2.6" fill="#888" text-anchor="end">0</text><circle cx="210" cy="737.2" r="15" fill="#A8C83A"/><circle cx="203" cy="731.8" r="2" fill="#4DAF50"/><circle cx="210" cy="727.8" r="2.2" fill="#8E44AD"/><circle cx="217" cy="731.8" r="2" fill="#29ABE2"/><path d="M203.500 748q0.500-5.500 6.500-5.500t6.500 5.500z" fill="#5A6570"/><path d="M209 742.500h2l0.600 4.500l-1.600 1l-1.600-1z" fill="#E74C3C"/><circle cx="210" cy="738" r="3.400" fill="#F2C9A0"/><path d="M206.400 737.500q0-4 3.600-4t3.600 4q-1.500-2-3.600-2t-3.600 2z" fill="#3B2F2F"/><rect x="42.88" y="777.00" width="174.74" height="70.57" fill="#fff" stroke="#444" stroke-width="0.5"/><path d="M42.88 788.08H217.62" stroke="#444" stroke-width="0.45"/><path d="M68.43 799.16H109.88" stroke="#444" stroke-width="0.45"/><path d="M133.11 799.16H177.42" stroke="#444" stroke-width="0.45"/><path d="M42.88 807.73H217.62" stroke="#444" stroke-width="0.45"/><path d="M42.88 814.34H217.62" stroke="#444" stroke-width="0.45"/><path d="M42.88 822.03H217.62" stroke="#444" stroke-width="0.45"/><path d="M42.88 834.00H217.62" stroke="#444" stroke-width="0.45"/><path d="M42.88 841.14H217.62" stroke="#444" stroke-width="0.45"/><path d="M68.43 788.08V847.58" stroke="#444" stroke-width="0.45"/><path d="M91.48 799.16V847.58" stroke="#444" stroke-width="0.45"/><path d="M109.88 788.08V847.58" stroke="#444" stroke-width="0.45"/><path d="M133.11 788.08V847.58" stroke="#444" stroke-width="0.45"/><path d="M145.61 799.16V847.58" stroke="#444" stroke-width="0.45"/><path d="M162.59 799.16V847.58" stroke="#444" stroke-width="0.45"/><path d="M177.42 788.08V847.58" stroke="#444" stroke-width="0.45"/><path d="M199.21 788.08V847.58" stroke="#444" stroke-width="0.45"/><text x="130.25" y="784.51" font-size="2.8" font-family="Liberation Serif,serif" font-weight="bold" fill="#1A1A1A" text-anchor="middle">Анализ продаж торговой фирмы «***»</text><text x="55.57" y="795.23" font-size="2.6" font-family="Liberation Serif,serif" font-weight="bold" fill="#1A1A1A" text-anchor="middle">Наименова-</text><text x="55.57" y="802.37" font-size="2.6" font-family="Liberation Serif,serif" font-weight="bold" fill="#1A1A1A" text-anchor="middle">ние товара</text><text x="88.98" y="794.87" font-size="2.6" font-family="Liberation Serif,serif" font-weight="bold" fill="#1A1A1A" text-anchor="middle">Цена за единицу (у.е.)</text><text x="121.49" y="795.23" font-size="2.6" font-family="Liberation Serif,serif" font-weight="bold" fill="#1A1A1A" text-anchor="middle">Предложе-</text><text x="121.49" y="802.37" font-size="2.6" font-family="Liberation Serif,serif" font-weight="bold" fill="#1A1A1A" text-anchor="middle">ние (шт.)</text><text x="155.26" y="794.87" font-size="2.6" font-family="Liberation Serif,serif" font-weight="bold" fill="#1A1A1A" text-anchor="middle">Продажа</text><text x="188.32" y="792.90" font-size="2.6" font-family="Liberation Serif,serif" font-weight="bold" fill="#1A1A1A" text-anchor="middle">Выручка</text><text x="188.32" y="799.16" font-size="2.6" font-family="Liberation Serif,serif" font-weight="bold" fill="#1A1A1A" text-anchor="middle">от продаж,</text><text x="188.32" y="805.41" font-size="2.6" font-family="Liberation Serif,serif" font-weight="bold" fill="#1A1A1A" text-anchor="middle">у.е.</text><text x="208.33" y="792.90" font-size="2.6" font-family="Liberation Serif,serif" font-weight="bold" fill="#1A1A1A" text-anchor="middle">Остаток</text><text x="208.33" y="799.16" font-size="2.6" font-family="Liberation Serif,serif" font-weight="bold" fill="#1A1A1A" text-anchor="middle">на</text><text x="208.33" y="805.41" font-size="2.6" font-family="Liberation Serif,serif" font-weight="bold" fill="#1A1A1A" text-anchor="middle">складе</text><text x="79.86" y="804.52" font-size="2.6" font-family="Liberation Serif,serif" font-weight="bold" fill="#1A1A1A" text-anchor="middle">Нал.</text><text x="100.59" y="804.52" font-size="2.6" font-family="Liberation Serif,serif" font-weight="bold" fill="#1A1A1A" text-anchor="middle">Безнал.</text><text x="139.36" y="804.52" font-size="2.6" font-family="Liberation Serif,serif" font-weight="bold" fill="#1A1A1A" text-anchor="middle">Нал.</text><text x="154.01" y="804.52" font-size="2.6" font-family="Liberation Serif,serif" font-weight="bold" fill="#1A1A1A" text-anchor="middle">Безнал.</text><text x="169.91" y="804.52" font-size="2.6" font-family="Liberation Serif,serif" font-weight="bold" fill="#1A1A1A" text-anchor="middle">Всего</text><text x="43.95" y="812.20" font-size="2.7" font-family="Liberation Serif,serif"  fill="#1A1A1A" text-anchor="start">Телевизор</text><text x="79.86" y="812.20" font-size="2.7" font-family="Liberation Serif,serif"  fill="#1A1A1A" text-anchor="middle">300</text><text x="100.59" y="812.20" font-size="2.7" font-family="Liberation Serif,serif"  fill="#1A1A1A" text-anchor="middle">310</text><text x="121.49" y="812.20" font-size="2.7" font-family="Liberation Serif,serif"  fill="#1A1A1A" text-anchor="middle">20</text><text x="139.36" y="812.20" font-size="2.7" font-family="Liberation Serif,serif"  fill="#1A1A1A" text-anchor="middle">5</text><text x="154.01" y="812.20" font-size="2.7" font-family="Liberation Serif,serif"  fill="#1A1A1A" text-anchor="middle">10</text><text x="43.95" y="819.35" font-size="2.7" font-family="Liberation Serif,serif"  fill="#1A1A1A" text-anchor="start">Кофеварка</text><text x="79.86" y="819.35" font-size="2.7" font-family="Liberation Serif,serif"  fill="#1A1A1A" text-anchor="middle">200</text><text x="100.59" y="819.35" font-size="2.7" font-family="Liberation Serif,serif"  fill="#1A1A1A" text-anchor="middle">205</text><text x="121.49" y="819.35" font-size="2.7" font-family="Liberation Serif,serif"  fill="#1A1A1A" text-anchor="middle">25</text><text x="139.36" y="819.35" font-size="2.7" font-family="Liberation Serif,serif"  fill="#1A1A1A" text-anchor="middle">5</text><text x="154.01" y="819.35" font-size="2.7" font-family="Liberation Serif,serif"  fill="#1A1A1A" text-anchor="middle">7</text><text x="43.95" y="838.82" font-size="2.7" font-family="Liberation Serif,serif"  fill="#1A1A1A" text-anchor="start">Видеокамера</text><text x="79.86" y="838.82" font-size="2.7" font-family="Liberation Serif,serif"  fill="#1A1A1A" text-anchor="middle">415</text><text x="100.59" y="838.82" font-size="2.7" font-family="Liberation Serif,serif"  fill="#1A1A1A" text-anchor="middle">430</text><text x="121.49" y="838.82" font-size="2.7" font-family="Liberation Serif,serif"  fill="#1A1A1A" text-anchor="middle">10</text><text x="139.36" y="838.82" font-size="2.7" font-family="Liberation Serif,serif"  fill="#1A1A1A" text-anchor="middle">2</text><text x="154.01" y="838.82" font-size="2.7" font-family="Liberation Serif,serif"  fill="#1A1A1A" text-anchor="middle">8</text><text x="43.95" y="845.43" font-size="2.7" font-family="Liberation Serif,serif"  fill="#1A1A1A" text-anchor="start">Фотоаппарат</text><text x="79.86" y="845.43" font-size="2.7" font-family="Liberation Serif,serif"  fill="#1A1A1A" text-anchor="middle">50</text><text x="100.59" y="845.43" font-size="2.7" font-family="Liberation Serif,serif"  fill="#1A1A1A" text-anchor="middle">51</text><text x="121.49" y="845.43" font-size="2.7" font-family="Liberation Serif,serif"  fill="#1A1A1A" text-anchor="middle">100</text><text x="139.36" y="845.43" font-size="2.7" font-family="Liberation Serif,serif"  fill="#1A1A1A" text-anchor="middle">57</text><text x="154.01" y="845.43" font-size="2.7" font-family="Liberation Serif,serif"  fill="#1A1A1A" text-anchor="middle">34</text><text x="43.95" y="826.49" font-size="2.7" font-family="Liberation Serif,serif"  fill="#1A1A1A" text-anchor="start">Музыкаль-</text><text x="43.95" y="832.21" font-size="2.7" font-family="Liberation Serif,serif"  fill="#1A1A1A" text-anchor="start">ный центр</text><text x="79.86" y="829.35" font-size="2.7" font-family="Liberation Serif,serif"  fill="#1A1A1A" text-anchor="middle">275</text><text x="100.59" y="829.35" font-size="2.7" font-family="Liberation Serif,serif"  fill="#1A1A1A" text-anchor="middle">280</text><text x="121.49" y="829.35" font-size="2.7" font-family="Liberation Serif,serif"  fill="#1A1A1A" text-anchor="middle">30</text><text x="139.36" y="829.35" font-size="2.7" font-family="Liberation Serif,serif"  fill="#1A1A1A" text-anchor="middle">9</text><text x="154.01" y="829.35" font-size="2.7" font-family="Liberation Serif,serif"  fill="#1A1A1A" text-anchor="middle">7</text><rect x="173.31" y="833.64" width="65.21" height="48.24" fill="#fff"/><path d="M175.99 842.57L237.63 834.53L237.63 865.80L175.99 871.16Z" fill="#E3F0F8"/><polyline points="175.99,862.23 185.81,851.51 196.53,855.08 207.25,842.57 216.19,846.15 223.33,837.21 230.48,840.79 237.63,834.53" fill="none" stroke="#B8C4CE" stroke-width="0.4"/><polyline points="175.99,866.69 189.39,860.44 201.89,856.87 214.40,847.93 226.91,842.57 237.63,836.32" fill="none" stroke="#E79C9C" stroke-width="0.4"/><path d="M178.67 869.02l8.58 -1.43v8.93l-8.58 1.07z" fill="#E8202A"/><path d="M188.67 864.19l8.58 -1.43v12.46l-8.58 1.07z" fill="#F59B1C"/><path d="M198.68 859.37l8.58 -1.43v15.98l-8.58 1.07z" fill="#8CC63F"/><path d="M208.50 854.01l8.58 -1.43v20.06l-8.58 1.07z" fill="#5BC4B5"/><path d="M218.33 849.01l8.58 -1.43v23.79l-8.58 1.07z" fill="#EE4B2B"/><path d="M228.34 845.08l8.58 -1.43v26.42l-8.58 1.07z" fill="#3F7FCF"/><circle cx="211" cy="922" r="5.200" fill="#8B5A3C"/><ellipse cx="211" cy="924.500" rx="3.400" ry="4" fill="#F5D5B8"/><path d="M203.500 941q0.500-9 7.500-9t7.500 9z" fill="#3F6E8C"/><path d="M209.500 932h3l-1.500 5z" fill="#fff"/><rect x="215" y="925" width="9" height="12" fill="#E8E8E8" stroke="#C9C9C9" stroke-width="0.4" transform="rotate(20 219 931)"/><rect x="217.500" y="925.500" width="6" height="2.500" fill="#F7C95C" transform="rotate(20 219 931)"/><rect x="198.500" y="935" width="8" height="8" fill="#F4C7C7" stroke="#E06666" stroke-width="0.4" transform="rotate(-12 202 939)"/><circle cx="212.500" cy="941.500" r="2.600" fill="#F5B731"/><circle cx="208.500" cy="943" r="2" fill="#F5B731"/><circle cx="201" cy="927" r="1.800" fill="#F59B1C"/><circle cx="199.500" cy="924" r="1.300" fill="#3F7FCF"/></svg>
</div></div>
<div class="a" style="left:279.00px;top:152.00px;width:15.00px;height:864.00px;background:#DCDCDC;"></div>
<div class="a" style="left:279.00px;top:152.00px;width:15.00px;height:15.00px;background:#fff;border:1px solid #ABABAB;box-sizing:border-box;"></div>
<div class="a" style="left:279.00px;top:1001.00px;width:15.00px;height:15.00px;background:#fff;border:1px solid #C4C4C4;box-sizing:border-box;"></div>
<div class="a" style="left:279.00px;top:405.00px;width:15.00px;height:337.00px;background:#fff;border:1px solid #ABABAB;box-sizing:border-box;"></div>
<svg class="a" style="left:279.00px;top:152.00px;" width="15" height="15" viewBox="0 0 15 15"><path d="M4 9.200h7l-3.500-4.200z" fill="#777"/></svg>
<svg class="a" style="left:279.00px;top:1001.00px;" width="15" height="15" viewBox="0 0 15 15"><path d="M4 6h7l-3.500 4.200z" fill="#777"/></svg>
<div class="a" style="left:298.00px;top:152.00px;width:1.00px;height:864.00px;background:#C6C6C6;"></div>
<div class="a" style="left:551.00px;top:168.00px;width:1102.00px;height:827.00px;background:#fff;border:1px solid #C6C6C6;box-sizing:border-box;"></div>
<div class="a" style="left:551px;top:168px;width:1101px;height:826px;overflow:hidden">
<div class="t" style="left:85.79px;top:74.51px;font-size:60.00px;line-height:60.00px;color:#000;font-weight:bold;transform:scaleX(1.1726);-webkit-text-stroke:2.4px #000;">Результаты</div>
<div class="t" style="left:509.61px;top:74.51px;font-size:60.00px;line-height:60.00px;color:#000;font-weight:bold;transform:scaleX(1.1349);-webkit-text-stroke:2.4px #000;">работы</div>
<div class="a" style="left:143.5px;top:208.5px;width:9px;height:9px;border-radius:50%;background:#000"></div>
<div class="t" style="left:169.81px;top:197.31px;font-size:32.00px;line-height:32.00px;color:#000;font-weight:bold;transform:scaleX(0.9632);">Screenshot</div>
<div class="t" style="left:346.86px;top:197.31px;font-size:32.00px;line-height:32.00px;color:#000;font-weight:bold;transform:scaleX(1.0305);">(сни́мок</div>
<div class="t" style="left:486.46px;top:197.31px;font-size:32.00px;line-height:32.00px;color:#000;font-weight:bold;transform:scaleX(1.0394);">экра́на)</div>
<div class="t" style="left:618.95px;top:197.31px;font-size:32.00px;line-height:32.00px;color:#000;transform:scaleX(1.0032);">таблицы</div>
<div class="t" style="left:756.19px;top:197.31px;font-size:32.00px;line-height:32.00px;color:#000;transform:scaleX(1.2651);">и</div>
<div class="t" style="left:784.66px;top:197.31px;font-size:32.00px;line-height:32.00px;color:#000;transform:scaleX(1.0880);">диаграммы</div>
<div class="t" style="left:168.50px;top:233.91px;font-size:32.00px;line-height:32.00px;color:#000;transform:scaleX(1.0681);">работы</div>
<div class="t" style="left:292.52px;top:233.91px;font-size:32.00px;line-height:32.00px;color:#000;font-weight:bold;transform:scaleX(1.0201);">офис-менеджера</div>
<svg class="a" style="left:0;top:0" width="1101" height="826"><path d="M358.0 229.5l1.5 -1.6l1.5 1.6l1.5 -1.6l1.5 1.6l1.5 -1.6l1.5 1.6l1.5 -1.6l1.5 1.6l1.5 -1.6l1.5 1.6l1.5 -1.6l1.5 1.6l1.5 -1.6l1.5 1.6l1.5 -1.6l1.5 1.6l1.5 -1.6l1.5 1.6l1.5 -1.6l1.5 1.6l1.5 -1.6l1.5 1.6l1.5 -1.6l1.5 1.6l1.5 -1.6l1.5 1.6l1.5 -1.6l1.5 1.6l1.5 -1.6l1.5 1.6l1.5 -1.6l1.5 1.6l1.5 -1.6l1.5 1.6l1.5 -1.6l1.5 1.6l1.5 -1.6l1.5 1.6l1.5 -1.6l1.5 1.6l1.5 -1.6l1.5 1.6l1.5 -1.6l1.5 1.6l1.5 -1.6l1.5 1.6l1.5 -1.6l1.5 1.6l1.5 -1.6l1.5 1.6l1.5 -1.6l1.5 1.6l1.5 -1.6l1.5 1.6l1.5 -1.6l1.5 1.6l1.5 -1.6l1.5 1.6l1.5 -1.6l1.5 1.6l1.5 -1.6l1.5 1.6l1.5 -1.6l1.5 1.6l1.5 -1.6l1.5 1.6l1.5 -1.6l1.5 1.6l1.5 -1.6l1.5 1.6l1.5 -1.6l1.5 1.6l1.5 -1.6l1.5 1.6l1.5 -1.6l1.5 1.6l1.5 -1.6l1.5 1.6l1.5 -1.6l1.5 1.6" fill="none" stroke="#E0443A" stroke-width="0.8"/></svg>
<svg class="a" style="left:0;top:0" width="1101" height="826"><path d="M486.6 229.5l1.5 -1.6l1.5 1.6l1.5 -1.6l1.5 1.6l1.5 -1.6l1.5 1.6l1.5 -1.6l1.5 1.6l1.5 -1.6l1.5 1.6l1.5 -1.6l1.5 1.6l1.5 -1.6l1.5 1.6l1.5 -1.6l1.5 1.6l1.5 -1.6l1.5 1.6l1.5 -1.6l1.5 1.6l1.5 -1.6l1.5 1.6l1.5 -1.6l1.5 1.6l1.5 -1.6l1.5 1.6l1.5 -1.6l1.5 1.6l1.5 -1.6l1.5 1.6l1.5 -1.6l1.5 1.6l1.5 -1.6l1.5 1.6l1.5 -1.6l1.5 1.6l1.5 -1.6l1.5 1.6l1.5 -1.6l1.5 1.6l1.5 -1.6l1.5 1.6l1.5 -1.6l1.5 1.6l1.5 -1.6l1.5 1.6l1.5 -1.6l1.5 1.6l1.5 -1.6l1.5 1.6l1.5 -1.6l1.5 1.6l1.5 -1.6l1.5 1.6l1.5 -1.6l1.5 1.6l1.5 -1.6l1.5 1.6l1.5 -1.6l1.5 1.6l1.5 -1.6l1.5 1.6l1.5 -1.6l1.5 1.6l1.5 -1.6l1.5 1.6l1.5 -1.6l1.5 1.6l1.5 -1.6l1.5 1.6l1.5 -1.6l1.5 1.6l1.5 -1.6l1.5 1.6l1.5 -1.6" fill="none" stroke="#E0443A" stroke-width="0.8"/></svg>
<svg class="a" style="left:799px;top:12px" width="184" height="184" viewBox="0 0 1080 1080"><rect x="52" y="62" width="968" height="970" fill="#F3F8FB"/><clipPath id="cm1"><circle cx="537" cy="548" r="432"/></clipPath><g clip-path="url(#cm1)"><rect x="100" y="110" width="880" height="640" fill="#56677D"/><rect x="300" y="382" width="338" height="330" rx="45" fill="#262B30"/><path d="M330 420q60-20 105 0l35 60l40-60q70-10 100 50l25 250h-360l15-200q5-70 40-100z" fill="#33A5A6"/><path d="M425 418h120l-30 120l-45 55l-35-60z" fill="#fff"/><path d="M425 418l-8 40l55 135l-30-130z" fill="#C5C9CC"/><path d="M545 418l10 45l-75 125l40-130z" fill="#B4B8BC"/><path d="M462 440h26l6 110l-20 35l-18-35z" fill="#F26B43"/><path d="M440 380h70v45l-38 22l-32-22z" fill="#E3BE9C"/><path d="M395 585l220-15v75l-145 12l-5 45h-110l10-100z" fill="#2A8788"/><path d="M300 575q40-45 75-25l30 40l-10 40q-60 10-95-55z" fill="#F2D3B3"/><ellipse cx="470" cy="305" rx="82" ry="98" fill="#F2D3B3"/><path d="M470 207a82 98 0 0 0 0 196z" fill="#E6C3A1"/><path d="M385 300q-15-110 70-140q95-20 108 70l-8 60q-10-60-35-70q-60 20-110 0q-20 30-25 80z" fill="#23262B"/><path d="M285 560q10-130 60-160l40 20l10 90l-40 90z" fill="#33A5A6"/><path d="M335 340q20-40 50-20l15 60l-20 40l-45-20z" fill="#F2D3B3"/><path d="M345 262q25-15 40 5l-10 50l50 70q10 30-15 40q-30-10-40-40l-20-70q-20-30-5-55z" fill="#F4602F"/><path d="M408 440q-10 40-10 70q-25 30-15 70q-30 30-50 80" fill="none" stroke="#F4602F" stroke-width="16" stroke-dasharray="14 8"/><path d="M135 690q0-75 60-95l-15-30q20 10 35 25q20-5 40 0q15-15 35-25l-12 30q50 20 45 95z" fill="#F4602F"/><rect x="135" y="668" width="188" height="34" rx="8" fill="#E8552A"/><ellipse cx="230" cy="615" rx="36" ry="20" fill="#F7A58B"/><ellipse cx="230" cy="615" rx="18" ry="9" fill="#56677D"/><rect x="100" y="700" width="880" height="42" fill="#71808F"/><rect x="100" y="740" width="880" height="10" fill="#2C3844"/><rect x="100" y="748" width="880" height="260" fill="#3C4D5D"/><path d="M572 485l120 30l270 2l-40 60v45l8 10v70l-175 70l-150-50v-160z" fill="#F4F4F4"/><path d="M605 560l150 45l170-55M605 625l150 45l170-55M605 690l150 45l170-50" fill="none" stroke="#D2D2D2" stroke-width="14"/><path d="M572 485l120 30l270 2l-120 50l-200-10z" fill="#FFFFFF"/></g></svg>
<div class="a" style="left:15.80px;top:288.80px;width:633.00px;height:224.40px;background:#fff;"></div>
<div class="a" style="left:15.80px;top:288.80px;width:633.00px;height:18.80px;background:#E8E8E8;"></div>
<div class="a" style="left:15.80px;top:288.80px;width:19.60px;height:224.40px;background:#E8E8E8;"></div>
<div class="a" style="left:299.50px;top:290.00px;width:1.00px;height:17.00px;background:#C8C8C8;"></div>
<div class="a" style="left:427.30px;top:290.00px;width:1.00px;height:17.00px;background:#C8C8C8;"></div>
<div class="a" style="left:533.20px;top:290.00px;width:1.00px;height:17.00px;background:#C8C8C8;"></div>
<div class="a" style="left:639.80px;top:290.00px;width:1.00px;height:17.00px;background:#C8C8C8;"></div>
<svg class="a" style="left:23.3px;top:295.5px" width="12" height="12"><path d="M10.500 2v8.500h-8.500z" fill="#BDBDBD"/></svg>
<div class="t" style="left:164.30px;top:295.67px;font-size:10.20px;line-height:10.20px;color:#444;">A</div>
<div class="t" style="left:360.50px;top:295.67px;font-size:10.20px;line-height:10.20px;color:#444;">B</div>
<div class="t" style="left:477.07px;top:295.67px;font-size:10.20px;line-height:10.20px;color:#444;">C</div>
<div class="t" style="left:583.32px;top:295.67px;font-size:10.20px;line-height:10.20px;color:#444;">D</div>
<div class="a" style="left:35.40px;top:308.20px;width:604.90px;height:18.00px;background:#FF6600;"></div>
<div class="a" style="left:299.50px;top:308.20px;width:1.00px;height:18.00px;background:#FFB27A;"></div>
<div class="a" style="left:427.30px;top:308.20px;width:1.00px;height:18.00px;background:#FFB27A;"></div>
<div class="a" style="left:533.20px;top:308.20px;width:1.00px;height:18.00px;background:#FFB27A;"></div>
<div class="t" style="left:145.78px;top:310.45px;font-size:14.00px;line-height:14.00px;color:#fff;font-weight:bold;font-style:italic;transform:scaleX(0.9119);">Навык</div>
<div class="t" style="left:333.78px;top:310.45px;font-size:14.00px;line-height:14.00px;color:#fff;font-weight:bold;font-style:italic;transform:scaleX(0.8932);">Вакансия</div>
<div class="t" style="left:441.37px;top:310.45px;font-size:14.00px;line-height:14.00px;color:#fff;font-weight:bold;font-style:italic;transform:scaleX(0.9336);">Кандидат 1</div>
<div class="t" style="left:545.77px;top:310.45px;font-size:14.00px;line-height:14.00px;color:#fff;font-weight:bold;font-style:italic;transform:scaleX(0.9300);">Кандитат 2</div>
<div class="a" style="left:35.40px;top:326.60px;width:604.90px;height:16.32px;background:#F8CBAD;"></div>
<div class="a" style="left:35.40px;top:326.60px;width:604.90px;height:1.00px;background:#FCE8DC;"></div>
<div class="t" style="left:36.00px;top:329.83px;font-size:12.60px;line-height:12.60px;color:#333;transform:scaleX(0.9701);">Навыки устного и письменного общения</div>
<div class="a" style="left:301.00px;top:328.00px;width:87.22px;height:12.92px;background:linear-gradient(90deg,#FFB628 0%,#FFD27A 55%,#FFF0D2 100%);border:1px solid #FFC24B;box-sizing:border-box;"></div>
<div class="t" style="left:420.66px;top:330.99px;font-size:11.00px;line-height:11.00px;color:#222;font-weight:bold;transform:scaleX(0.8400);">7</div>
<div class="a" style="left:428.80px;top:328.00px;width:71.89px;height:12.92px;background:linear-gradient(90deg,#FFB628 0%,#FFD27A 55%,#FFF0D2 100%);border:1px solid #FFC24B;box-sizing:border-box;"></div>
<div class="t" style="left:526.56px;top:330.99px;font-size:11.00px;line-height:11.00px;color:#222;font-weight:bold;transform:scaleX(0.8400);">7</div>
<div class="a" style="left:534.70px;top:328.00px;width:103.40px;height:12.92px;background:linear-gradient(90deg,#FFB628 0%,#FFD27A 55%,#FFF0D2 100%);border:1px solid #FFC24B;box-sizing:border-box;"></div>
<div class="t" style="left:628.02px;top:330.99px;font-size:11.00px;line-height:11.00px;color:#222;font-weight:bold;transform:scaleX(0.8400);">10</div>
<div class="a" style="left:299.50px;top:326.60px;width:1.00px;height:16.32px;background:#FCE8DC;"></div>
<div class="a" style="left:427.30px;top:326.60px;width:1.00px;height:16.32px;background:#FCE8DC;"></div>
<div class="a" style="left:533.20px;top:326.60px;width:1.00px;height:16.32px;background:#FCE8DC;"></div>
<div class="a" style="left:35.40px;top:342.92px;width:604.90px;height:16.32px;background:#F8CBAD;"></div>
<div class="a" style="left:35.40px;top:342.92px;width:604.90px;height:1.00px;background:#FCE8DC;"></div>
<div class="t" style="left:36.00px;top:346.15px;font-size:12.60px;line-height:12.60px;color:#333;transform:scaleX(0.9663);">Навыки проведения презентаций</div>
<div class="a" style="left:301.00px;top:344.32px;width:87.22px;height:12.92px;background:linear-gradient(90deg,#FFB628 0%,#FFD27A 55%,#FFF0D2 100%);border:1px solid #FFC24B;box-sizing:border-box;"></div>
<div class="t" style="left:420.66px;top:347.31px;font-size:11.00px;line-height:11.00px;color:#222;font-weight:bold;transform:scaleX(0.8400);">7</div>
<div class="a" style="left:428.80px;top:344.32px;width:51.35px;height:12.92px;background:linear-gradient(90deg,#FFB628 0%,#FFD27A 55%,#FFF0D2 100%);border:1px solid #FFC24B;box-sizing:border-box;"></div>
<div class="t" style="left:526.56px;top:347.31px;font-size:11.00px;line-height:11.00px;color:#222;font-weight:bold;transform:scaleX(0.8400);">5</div>
<div class="a" style="left:534.70px;top:344.32px;width:31.02px;height:12.92px;background:linear-gradient(90deg,#FFB628 0%,#FFD27A 55%,#FFF0D2 100%);border:1px solid #FFC24B;box-sizing:border-box;"></div>
<div class="t" style="left:633.16px;top:347.31px;font-size:11.00px;line-height:11.00px;color:#222;font-weight:bold;transform:scaleX(0.8400);">3</div>
<div class="a" style="left:299.50px;top:342.92px;width:1.00px;height:16.32px;background:#FCE8DC;"></div>
<div class="a" style="left:427.30px;top:342.92px;width:1.00px;height:16.32px;background:#FCE8DC;"></div>
<div class="a" style="left:533.20px;top:342.92px;width:1.00px;height:16.32px;background:#FCE8DC;"></div>
<div class="a" style="left:35.40px;top:359.24px;width:604.90px;height:16.32px;background:#F8CBAD;"></div>
<div class="a" style="left:35.40px;top:359.24px;width:604.90px;height:1.00px;background:#FCE8DC;"></div>
<div class="t" style="left:36.60px;top:362.47px;font-size:12.60px;line-height:12.60px;color:#333;transform:scaleX(0.9604);">Знание/понимание английского</div>
<div class="a" style="left:301.00px;top:360.64px;width:62.30px;height:12.92px;background:linear-gradient(90deg,#FFB628 0%,#FFD27A 55%,#FFF0D2 100%);border:1px solid #FFC24B;box-sizing:border-box;"></div>
<div class="t" style="left:420.66px;top:363.63px;font-size:11.00px;line-height:11.00px;color:#222;font-weight:bold;transform:scaleX(0.8400);">5</div>
<div class="a" style="left:428.80px;top:360.64px;width:61.62px;height:12.92px;background:linear-gradient(90deg,#FFB628 0%,#FFD27A 55%,#FFF0D2 100%);border:1px solid #FFC24B;box-sizing:border-box;"></div>
<div class="t" style="left:526.56px;top:363.63px;font-size:11.00px;line-height:11.00px;color:#222;font-weight:bold;transform:scaleX(0.8400);">6</div>
<div class="a" style="left:534.70px;top:360.64px;width:72.38px;height:12.92px;background:linear-gradient(90deg,#FFB628 0%,#FFD27A 55%,#FFF0D2 100%);border:1px solid #FFC24B;box-sizing:border-box;"></div>
<div class="t" style="left:633.16px;top:363.63px;font-size:11.00px;line-height:11.00px;color:#222;font-weight:bold;transform:scaleX(0.8400);">7</div>
<div class="a" style="left:299.50px;top:359.24px;width:1.00px;height:16.32px;background:#FCE8DC;"></div>
<div class="a" style="left:427.30px;top:359.24px;width:1.00px;height:16.32px;background:#FCE8DC;"></div>
<div class="a" style="left:533.20px;top:359.24px;width:1.00px;height:16.32px;background:#FCE8DC;"></div>
<div class="a" style="left:35.40px;top:375.56px;width:604.90px;height:16.32px;background:#F8CBAD;"></div>
<div class="a" style="left:35.40px;top:375.56px;width:604.90px;height:1.00px;background:#FCE8DC;"></div>
<div class="t" style="left:36.60px;top:378.79px;font-size:12.60px;line-height:12.60px;color:#333;transform:scaleX(0.9751);">Знание технологии производства товаров</div>
<div class="a" style="left:301.00px;top:376.96px;width:24.92px;height:12.92px;background:linear-gradient(90deg,#FFB628 0%,#FFD27A 55%,#FFF0D2 100%);border:1px solid #FFC24B;box-sizing:border-box;"></div>
<div class="t" style="left:420.66px;top:379.95px;font-size:11.00px;line-height:11.00px;color:#222;font-weight:bold;transform:scaleX(0.8400);">2</div>
<div class="a" style="left:428.80px;top:376.96px;width:30.81px;height:12.92px;background:linear-gradient(90deg,#FFB628 0%,#FFD27A 55%,#FFF0D2 100%);border:1px solid #FFC24B;box-sizing:border-box;"></div>
<div class="t" style="left:526.56px;top:379.95px;font-size:11.00px;line-height:11.00px;color:#222;font-weight:bold;transform:scaleX(0.8400);">3</div>
<div class="a" style="left:534.70px;top:376.96px;width:72.38px;height:12.92px;background:linear-gradient(90deg,#FFB628 0%,#FFD27A 55%,#FFF0D2 100%);border:1px solid #FFC24B;box-sizing:border-box;"></div>
<div class="t" style="left:633.16px;top:379.95px;font-size:11.00px;line-height:11.00px;color:#222;font-weight:bold;transform:scaleX(0.8400);">7</div>
<div class="a" style="left:299.50px;top:375.56px;width:1.00px;height:16.32px;background:#FCE8DC;"></div>
<div class="a" style="left:427.30px;top:375.56px;width:1.00px;height:16.32px;background:#FCE8DC;"></div>
<div class="a" style="left:533.20px;top:375.56px;width:1.00px;height:16.32px;background:#FCE8DC;"></div>
<div class="a" style="left:35.40px;top:391.88px;width:604.90px;height:16.32px;background:#F8CBAD;"></div>
<div class="a" style="left:35.40px;top:391.88px;width:604.90px;height:1.00px;background:#FCE8DC;"></div>
<div class="t" style="left:36.60px;top:395.11px;font-size:12.60px;line-height:12.60px;color:#333;transform:scaleX(0.9717);">Знание финансов и бухгалтерии</div>
<div class="a" style="left:301.00px;top:393.28px;width:62.30px;height:12.92px;background:linear-gradient(90deg,#FFB628 0%,#FFD27A 55%,#FFF0D2 100%);border:1px solid #FFC24B;box-sizing:border-box;"></div>
<div class="t" style="left:420.66px;top:396.27px;font-size:11.00px;line-height:11.00px;color:#222;font-weight:bold;transform:scaleX(0.8400);">5</div>
<div class="a" style="left:428.80px;top:393.28px;width:51.35px;height:12.92px;background:linear-gradient(90deg,#FFB628 0%,#FFD27A 55%,#FFF0D2 100%);border:1px solid #FFC24B;box-sizing:border-box;"></div>
<div class="t" style="left:526.56px;top:396.27px;font-size:11.00px;line-height:11.00px;color:#222;font-weight:bold;transform:scaleX(0.8400);">5</div>
<div class="a" style="left:534.70px;top:393.28px;width:82.72px;height:12.92px;background:linear-gradient(90deg,#FFB628 0%,#FFD27A 55%,#FFF0D2 100%);border:1px solid #FFC24B;box-sizing:border-box;"></div>
<div class="t" style="left:633.16px;top:396.27px;font-size:11.00px;line-height:11.00px;color:#222;font-weight:bold;transform:scaleX(0.8400);">8</div>
<div class="a" style="left:299.50px;top:391.88px;width:1.00px;height:16.32px;background:#FCE8DC;"></div>
<div class="a" style="left:427.30px;top:391.88px;width:1.00px;height:16.32px;background:#FCE8DC;"></div>
<div class="a" style="left:533.20px;top:391.88px;width:1.00px;height:16.32px;background:#FCE8DC;"></div>
<div class="a" style="left:35.40px;top:408.20px;width:604.90px;height:16.32px;background:#F8CBAD;"></div>
<div class="a" style="left:35.40px;top:408.20px;width:604.90px;height:1.00px;background:#FCE8DC;"></div>
<div class="t" style="left:36.60px;top:411.43px;font-size:12.60px;line-height:12.60px;color:#333;transform:scaleX(0.9656);">Знание компьютера и ПО</div>
<div class="a" style="left:301.00px;top:409.60px;width:49.84px;height:12.92px;background:linear-gradient(90deg,#FFB628 0%,#FFD27A 55%,#FFF0D2 100%);border:1px solid #FFC24B;box-sizing:border-box;"></div>
<div class="t" style="left:420.66px;top:412.59px;font-size:11.00px;line-height:11.00px;color:#222;font-weight:bold;transform:scaleX(0.8400);">4</div>
<div class="a" style="left:428.80px;top:409.60px;width:30.81px;height:12.92px;background:linear-gradient(90deg,#FFB628 0%,#FFD27A 55%,#FFF0D2 100%);border:1px solid #FFC24B;box-sizing:border-box;"></div>
<div class="t" style="left:526.56px;top:412.59px;font-size:11.00px;line-height:11.00px;color:#222;font-weight:bold;transform:scaleX(0.8400);">3</div>
<div class="a" style="left:534.70px;top:409.60px;width:62.04px;height:12.92px;background:linear-gradient(90deg,#FFB628 0%,#FFD27A 55%,#FFF0D2 100%);border:1px solid #FFC24B;box-sizing:border-box;"></div>
<div class="t" style="left:633.16px;top:412.59px;font-size:11.00px;line-height:11.00px;color:#222;font-weight:bold;transform:scaleX(0.8400);">6</div>
<div class="a" style="left:299.50px;top:408.20px;width:1.00px;height:16.32px;background:#FCE8DC;"></div>
<div class="a" style="left:427.30px;top:408.20px;width:1.00px;height:16.32px;background:#FCE8DC;"></div>
<div class="a" style="left:533.20px;top:408.20px;width:1.00px;height:16.32px;background:#FCE8DC;"></div>
<div class="a" style="left:35.40px;top:424.52px;width:604.90px;height:16.32px;background:#F8CBAD;"></div>
<div class="a" style="left:35.40px;top:424.52px;width:604.90px;height:1.00px;background:#FCE8DC;"></div>
<div class="t" style="left:36.98px;top:427.75px;font-size:12.60px;line-height:12.60px;color:#333;transform:scaleX(0.9750);">Аналетические способности</div>
<div class="a" style="left:301.00px;top:425.92px;width:62.30px;height:12.92px;background:linear-gradient(90deg,#FFB628 0%,#FFD27A 55%,#FFF0D2 100%);border:1px solid #FFC24B;box-sizing:border-box;"></div>
<div class="t" style="left:420.66px;top:428.91px;font-size:11.00px;line-height:11.00px;color:#222;font-weight:bold;transform:scaleX(0.8400);">5</div>
<div class="a" style="left:428.80px;top:425.92px;width:71.89px;height:12.92px;background:linear-gradient(90deg,#FFB628 0%,#FFD27A 55%,#FFF0D2 100%);border:1px solid #FFC24B;box-sizing:border-box;"></div>
<div class="t" style="left:526.56px;top:428.91px;font-size:11.00px;line-height:11.00px;color:#222;font-weight:bold;transform:scaleX(0.8400);">7</div>
<div class="a" style="left:534.70px;top:425.92px;width:93.06px;height:12.92px;background:linear-gradient(90deg,#FFB628 0%,#FFD27A 55%,#FFF0D2 100%);border:1px solid #FFC24B;box-sizing:border-box;"></div>
<div class="t" style="left:633.16px;top:428.91px;font-size:11.00px;line-height:11.00px;color:#222;font-weight:bold;transform:scaleX(0.8400);">9</div>
<div class="a" style="left:299.50px;top:424.52px;width:1.00px;height:16.32px;background:#FCE8DC;"></div>
<div class="a" style="left:427.30px;top:424.52px;width:1.00px;height:16.32px;background:#FCE8DC;"></div>
<div class="a" style="left:533.20px;top:424.52px;width:1.00px;height:16.32px;background:#FCE8DC;"></div>
<div class="a" style="left:35.40px;top:440.84px;width:604.90px;height:16.32px;background:#F8CBAD;"></div>
<div class="a" style="left:35.40px;top:440.84px;width:604.90px;height:1.00px;background:#FCE8DC;"></div>
<div class="t" style="left:36.89px;top:444.07px;font-size:12.60px;line-height:12.60px;color:#333;transform:scaleX(0.9728);">Лидерские навыки</div>
<div class="a" style="left:301.00px;top:442.24px;width:99.68px;height:12.92px;background:linear-gradient(90deg,#FFB628 0%,#FFD27A 55%,#FFF0D2 100%);border:1px solid #FFC24B;box-sizing:border-box;"></div>
<div class="t" style="left:420.66px;top:445.23px;font-size:11.00px;line-height:11.00px;color:#222;font-weight:bold;transform:scaleX(0.8400);">8</div>
<div class="a" style="left:428.80px;top:442.24px;width:92.43px;height:12.92px;background:linear-gradient(90deg,#FFB628 0%,#FFD27A 55%,#FFF0D2 100%);border:1px solid #FFC24B;box-sizing:border-box;"></div>
<div class="t" style="left:526.56px;top:445.23px;font-size:11.00px;line-height:11.00px;color:#222;font-weight:bold;transform:scaleX(0.8400);">9</div>
<div class="a" style="left:534.70px;top:442.24px;width:82.72px;height:12.92px;background:linear-gradient(90deg,#FFB628 0%,#FFD27A 55%,#FFF0D2 100%);border:1px solid #FFC24B;box-sizing:border-box;"></div>
<div class="t" style="left:633.16px;top:445.23px;font-size:11.00px;line-height:11.00px;color:#222;font-weight:bold;transform:scaleX(0.8400);">8</div>
<div class="a" style="left:299.50px;top:440.84px;width:1.00px;height:16.32px;background:#FCE8DC;"></div>
<div class="a" style="left:427.30px;top:440.84px;width:1.00px;height:16.32px;background:#FCE8DC;"></div>
<div class="a" style="left:533.20px;top:440.84px;width:1.00px;height:16.32px;background:#FCE8DC;"></div>
<div class="a" style="left:35.40px;top:457.16px;width:604.90px;height:16.32px;background:#F8CBAD;"></div>
<div class="a" style="left:35.40px;top:457.16px;width:604.90px;height:1.00px;background:#FCE8DC;"></div>
<div class="t" style="left:35.98px;top:460.39px;font-size:12.60px;line-height:12.60px;color:#333;transform:scaleX(0.9844);">Ведение переговоров</div>
<div class="a" style="left:301.00px;top:458.56px;width:99.68px;height:12.92px;background:linear-gradient(90deg,#FFB628 0%,#FFD27A 55%,#FFF0D2 100%);border:1px solid #FFC24B;box-sizing:border-box;"></div>
<div class="t" style="left:420.66px;top:461.55px;font-size:11.00px;line-height:11.00px;color:#222;font-weight:bold;transform:scaleX(0.8400);">8</div>
<div class="a" style="left:428.80px;top:458.56px;width:71.89px;height:12.92px;background:linear-gradient(90deg,#FFB628 0%,#FFD27A 55%,#FFF0D2 100%);border:1px solid #FFC24B;box-sizing:border-box;"></div>
<div class="t" style="left:526.56px;top:461.55px;font-size:11.00px;line-height:11.00px;color:#222;font-weight:bold;transform:scaleX(0.8400);">7</div>
<div class="a" style="left:534.70px;top:458.56px;width:31.02px;height:12.92px;background:linear-gradient(90deg,#FFB628 0%,#FFD27A 55%,#FFF0D2 100%);border:1px solid #FFC24B;box-sizing:border-box;"></div>
<div class="t" style="left:633.16px;top:461.55px;font-size:11.00px;line-height:11.00px;color:#222;font-weight:bold;transform:scaleX(0.8400);">3</div>
<div class="a" style="left:299.50px;top:457.16px;width:1.00px;height:16.32px;background:#FCE8DC;"></div>
<div class="a" style="left:427.30px;top:457.16px;width:1.00px;height:16.32px;background:#FCE8DC;"></div>
<div class="a" style="left:533.20px;top:457.16px;width:1.00px;height:16.32px;background:#FCE8DC;"></div>
<div class="a" style="left:35.40px;top:473.60px;width:613.40px;height:1.00px;background:#EAEAEA;"></div>
<div class="a" style="left:35.40px;top:486.40px;width:613.40px;height:1.00px;background:#EAEAEA;"></div>
<div class="a" style="left:35.40px;top:501.60px;width:613.40px;height:1.00px;background:#EAEAEA;"></div>
<div class="a" style="left:299.50px;top:473.60px;width:1.00px;height:40.00px;background:#EAEAEA;"></div>
<div class="a" style="left:427.30px;top:473.60px;width:1.00px;height:40.00px;background:#EAEAEA;"></div>
<div class="a" style="left:533.20px;top:473.60px;width:1.00px;height:40.00px;background:#EAEAEA;"></div>
<div class="a" style="left:639.80px;top:473.60px;width:1.00px;height:40.00px;background:#EAEAEA;"></div>
<div class="a" style="left:640.80px;top:342.42px;width:8.00px;height:1.00px;background:#E4E4E4;"></div>
<div class="a" style="left:640.80px;top:358.74px;width:8.00px;height:1.00px;background:#E4E4E4;"></div>
<div class="a" style="left:640.80px;top:375.06px;width:8.00px;height:1.00px;background:#E4E4E4;"></div>
<div class="a" style="left:640.80px;top:391.38px;width:8.00px;height:1.00px;background:#E4E4E4;"></div>
<div class="a" style="left:640.80px;top:407.70px;width:8.00px;height:1.00px;background:#E4E4E4;"></div>
<div class="a" style="left:640.80px;top:424.02px;width:8.00px;height:1.00px;background:#E4E4E4;"></div>
<div class="a" style="left:640.80px;top:440.34px;width:8.00px;height:1.00px;background:#E4E4E4;"></div>
<div class="a" style="left:640.80px;top:456.66px;width:8.00px;height:1.00px;background:#E4E4E4;"></div>
<div class="a" style="left:640.80px;top:472.98px;width:8.00px;height:1.00px;background:#E4E4E4;"></div>
<div class="a" style="left:640.80px;top:308.00px;width:8.00px;height:1.00px;background:#E4E4E4;"></div>
<div class="t" style="left:23.00px;top:314.80px;font-size:10.40px;line-height:10.40px;color:#444;transform:scaleX(0.9000);">1</div>
<div class="t" style="left:23.00px;top:331.10px;font-size:10.40px;line-height:10.40px;color:#444;transform:scaleX(0.9000);">2</div>
<div class="t" style="left:23.00px;top:347.40px;font-size:10.40px;line-height:10.40px;color:#444;transform:scaleX(0.9000);">3</div>
<div class="t" style="left:23.00px;top:363.80px;font-size:10.40px;line-height:10.40px;color:#444;transform:scaleX(0.9000);">4</div>
<div class="t" style="left:23.00px;top:380.00px;font-size:10.40px;line-height:10.40px;color:#444;transform:scaleX(0.9000);">5</div>
<div class="t" style="left:23.00px;top:396.40px;font-size:10.40px;line-height:10.40px;color:#444;transform:scaleX(0.9000);">6</div>
<div class="t" style="left:23.00px;top:412.70px;font-size:10.40px;line-height:10.40px;color:#444;transform:scaleX(0.9000);">7</div>
<div class="t" style="left:23.00px;top:429.00px;font-size:10.40px;line-height:10.40px;color:#444;transform:scaleX(0.9000);">8</div>
<div class="t" style="left:23.00px;top:445.40px;font-size:10.40px;line-height:10.40px;color:#444;transform:scaleX(0.9000);">9</div>
<div class="t" style="left:20.30px;top:461.70px;font-size:10.40px;line-height:10.40px;color:#444;transform:scaleX(0.9000);">10</div>
<div class="t" style="left:20.30px;top:476.30px;font-size:10.40px;line-height:10.40px;color:#444;transform:scaleX(0.9000);">11</div>
<div class="t" style="left:20.30px;top:490.60px;font-size:10.40px;line-height:10.40px;color:#444;transform:scaleX(0.9000);">12</div>
<div class="t" style="left:20.30px;top:504.30px;font-size:10.40px;line-height:10.40px;color:#444;transform:scaleX(0.9000);">13</div>
<div class="a" style="left:16.50px;top:307.70px;width:18.50px;height:1.00px;background:#CFCFCF;"></div>
<div class="a" style="left:16.50px;top:326.10px;width:18.50px;height:1.00px;background:#CFCFCF;"></div>
<div class="a" style="left:16.50px;top:342.42px;width:18.50px;height:1.00px;background:#CFCFCF;"></div>
<div class="a" style="left:16.50px;top:358.74px;width:18.50px;height:1.00px;background:#CFCFCF;"></div>
<div class="a" style="left:16.50px;top:375.06px;width:18.50px;height:1.00px;background:#CFCFCF;"></div>
<div class="a" style="left:16.50px;top:391.38px;width:18.50px;height:1.00px;background:#CFCFCF;"></div>
<div class="a" style="left:16.50px;top:407.70px;width:18.50px;height:1.00px;background:#CFCFCF;"></div>
<div class="a" style="left:16.50px;top:424.02px;width:18.50px;height:1.00px;background:#CFCFCF;"></div>
<div class="a" style="left:16.50px;top:440.34px;width:18.50px;height:1.00px;background:#CFCFCF;"></div>
<div class="a" style="left:16.50px;top:456.66px;width:18.50px;height:1.00px;background:#CFCFCF;"></div>
<div class="a" style="left:16.50px;top:472.98px;width:18.50px;height:1.00px;background:#CFCFCF;"></div>
<div class="a" style="left:16.50px;top:485.90px;width:18.50px;height:1.00px;background:#CFCFCF;"></div>
<div class="a" style="left:16.50px;top:501.10px;width:18.50px;height:1.00px;background:#CFCFCF;"></div>
<div class="a" style="left:16.50px;top:473.10px;width:18.50px;height:1.00px;background:#CFCFCF;"></div>
<div class="a" style="left:427.80px;top:487.00px;width:105.90px;height:14.40px;background:#63BE7B;"></div>
<div class="a" style="left:533.70px;top:487.00px;width:106.60px;height:14.40px;background:#F8696B;"></div>
<div class="t" style="left:302.43px;top:489.47px;font-size:9.60px;line-height:9.60px;color:#111;font-weight:bold;transform:scaleX(0.9483);">Соответствие должности</div>
<div class="t" style="left:514.08px;top:488.46px;font-size:10.80px;line-height:10.80px;color:#1E4D2B;transform:scaleX(0.8347);">92%</div>
<div class="t" style="left:620.61px;top:488.46px;font-size:10.80px;line-height:10.80px;color:#6B1A1C;transform:scaleX(0.8381);">82%</div>
<svg class="a" style="left:649px;top:432px" width="460" height="350" viewBox="1200 600 460 350"><path d="M1200 614.500h436" stroke="#DDE3EA" stroke-width="1.300"/><path d="M1206.5 608.500v6" stroke="#DDE3EA" stroke-width="1.200"/><path d="M1265.5 608.500v6" stroke="#DDE3EA" stroke-width="1.200"/><path d="M1324.2 608.500v6" stroke="#DDE3EA" stroke-width="1.200"/><path d="M1383.1 608.500v6" stroke="#DDE3EA" stroke-width="1.200"/><path d="M1442.0 608.500v6" stroke="#DDE3EA" stroke-width="1.200"/><path d="M1500.2 608.500v6" stroke="#DDE3EA" stroke-width="1.200"/><path d="M1559.5 608.500v6" stroke="#DDE3EA" stroke-width="1.200"/><path d="M1618.3 608.500v6" stroke="#DDE3EA" stroke-width="1.200"/><polygon points="1423.5,777.6 1432.1,780.7 1436.7,788.7 1435.1,797.7 1428.1,803.6 1418.9,803.6 1411.9,797.7 1410.3,788.7 1414.9,780.7" fill="none" stroke="#E9EBF0" stroke-width="0.8"/><polygon points="1423.5,764.2 1440.7,770.5 1449.9,786.3 1446.7,804.4 1432.7,816.2 1414.3,816.2 1400.3,804.4 1397.1,786.3 1406.3,770.5" fill="none" stroke="#E9EBF0" stroke-width="0.8"/><polygon points="1423.5,750.8 1449.3,760.2 1463.1,784.0 1458.3,811.1 1437.2,828.8 1409.8,828.8 1388.7,811.1 1383.9,784.0 1397.7,760.2" fill="none" stroke="#E9EBF0" stroke-width="0.8"/><polygon points="1423.5,737.4 1458.0,749.9 1476.3,781.7 1469.9,817.8 1441.8,841.4 1405.2,841.4 1377.1,817.8 1370.7,781.7 1389.0,749.9" fill="none" stroke="#E9EBF0" stroke-width="0.8"/><polygon points="1423.5,724.0 1466.6,739.7 1489.5,779.4 1481.5,824.5 1446.4,854.0 1400.6,854.0 1365.5,824.5 1357.5,779.4 1380.4,739.7" fill="none" stroke="#E9EBF0" stroke-width="0.8"/><polygon points="1423.5,744.1 1453.6,755.1 1456.5,785.2 1435.1,797.7 1435.0,822.5 1414.3,816.2 1394.5,807.8 1370.7,781.7 1389.0,749.9" fill="none" stroke="#FFCC4D" stroke-width="2.6" stroke-linejoin="round"/><polygon points="1423.5,744.1 1445.0,765.3 1463.1,784.0 1440.9,801.0 1435.0,822.5 1416.6,809.9 1382.9,814.5 1364.1,780.5 1393.4,755.1" fill="none" stroke="#F5360F" stroke-width="2.6" stroke-linejoin="round"/><polygon points="1423.5,724.0 1436.4,775.6 1469.7,782.9 1464.1,814.5 1441.8,841.4 1409.8,828.8 1371.3,821.1 1370.7,781.7 1410.6,775.6" fill="none" stroke="#0FA34D" stroke-width="2.6" stroke-linejoin="round"/><path d="M1298.2 919h24" stroke="#FFCC4D" stroke-width="2.6"/><path d="M1382 919h24.2" stroke="#F5360F" stroke-width="2.6"/><path d="M1475.8 919h24.2" stroke="#0FA34D" stroke-width="2.6"/></svg>
<div class="t" style="left:671.00px;top:463.69px;font-size:17.50px;line-height:17.50px;color:#3E4D66;font-weight:bold;transform:scaleX(0.9733);">Сравнение требований к должности и навыков</div>
<div class="t" style="left:819.79px;top:487.29px;font-size:17.50px;line-height:17.50px;color:#3E4D66;font-weight:bold;transform:scaleX(0.9974);">кандидатов</div>
<div class="t" style="left:850.81px;top:550.53px;font-size:10.60px;line-height:10.60px;color:#5A6678;">10</div>
<div class="t" style="left:856.70px;top:564.03px;font-size:10.60px;line-height:10.60px;color:#5A6678;">8</div>
<div class="t" style="left:856.70px;top:577.33px;font-size:10.60px;line-height:10.60px;color:#5A6678;">6</div>
<div class="t" style="left:856.70px;top:590.63px;font-size:10.60px;line-height:10.60px;color:#5A6678;">4</div>
<div class="t" style="left:856.70px;top:604.53px;font-size:10.60px;line-height:10.60px;color:#5A6678;">2</div>
<div class="t" style="left:856.70px;top:618.03px;font-size:10.60px;line-height:10.60px;color:#5A6678;">0</div>
<div class="t" style="left:830.36px;top:526.33px;font-size:10.60px;line-height:10.60px;color:#44546A;font-weight:bold;transform:scaleX(0.8997);">Навыки устного и</div>
<div class="t" style="left:817.72px;top:539.53px;font-size:10.60px;line-height:10.60px;color:#44546A;font-weight:bold;transform:scaleX(0.9215);">письменного общения</div>
<div class="t" style="left:916.95px;top:556.23px;font-size:10.60px;line-height:10.60px;color:#44546A;font-weight:bold;transform:scaleX(0.9197);">Навыки проведения</div>
<div class="t" style="left:934.20px;top:569.43px;font-size:10.60px;line-height:10.60px;color:#44546A;font-weight:bold;transform:scaleX(0.9486);">презентаций</div>
<div class="t" style="left:940.97px;top:598.73px;font-size:10.60px;line-height:10.60px;color:#44546A;font-weight:bold;transform:scaleX(0.9511);">Знание/понимание</div>
<div class="t" style="left:958.72px;top:612.03px;font-size:10.60px;line-height:10.60px;color:#44546A;font-weight:bold;transform:scaleX(0.9157);">английского</div>
<div class="t" style="left:939.98px;top:645.03px;font-size:10.60px;line-height:10.60px;color:#44546A;font-weight:bold;transform:scaleX(0.9228);">Знание технологии</div>
<div class="t" style="left:932.64px;top:658.53px;font-size:10.60px;line-height:10.60px;color:#44546A;font-weight:bold;transform:scaleX(0.8927);">производства товаров</div>
<div class="t" style="left:896.59px;top:676.53px;font-size:10.60px;line-height:10.60px;color:#44546A;font-weight:bold;transform:scaleX(0.8931);">Знание финансов и</div>
<div class="t" style="left:912.46px;top:689.53px;font-size:10.60px;line-height:10.60px;color:#44546A;font-weight:bold;transform:scaleX(0.9082);">бухгалтерии</div>
<div class="t" style="left:741.08px;top:676.53px;font-size:10.60px;line-height:10.60px;color:#44546A;font-weight:bold;transform:scaleX(0.9191);">Знание компьютера и</div>
<div class="t" style="left:784.62px;top:689.53px;font-size:10.60px;line-height:10.60px;color:#44546A;font-weight:bold;transform:scaleX(0.9653);">ПО</div>
<div class="t" style="left:739.46px;top:645.03px;font-size:10.60px;line-height:10.60px;color:#44546A;font-weight:bold;transform:scaleX(0.9137);">Аналетические</div>
<div class="t" style="left:745.63px;top:658.53px;font-size:10.60px;line-height:10.60px;color:#44546A;font-weight:bold;transform:scaleX(0.8915);">способности</div>
<div class="t" style="left:712.86px;top:604.73px;font-size:10.60px;line-height:10.60px;color:#44546A;font-weight:bold;transform:scaleX(0.9175);">Лидерские навыки</div>
<div class="t" style="left:722.35px;top:563.73px;font-size:10.60px;line-height:10.60px;color:#44546A;font-weight:bold;transform:scaleX(0.9123);">Ведение переговоров</div>
<div class="t" style="left:773.18px;top:745.03px;font-size:10.60px;line-height:10.60px;color:#44546A;transform:scaleX(0.9390);">Вакансия</div>
<div class="t" style="left:856.15px;top:745.03px;font-size:10.60px;line-height:10.60px;color:#44546A;transform:scaleX(0.9726);">Кандидат 1</div>
<div class="t" style="left:949.76px;top:745.03px;font-size:10.60px;line-height:10.60px;color:#44546A;transform:scaleX(0.9673);">Кандитат 2</div>
</div>
<div class="a" style="left:1904.00px;top:152.00px;width:15.00px;height:807.00px;background:#DCDCDC;"></div>
<div class="a" style="left:1904.00px;top:152.00px;width:15.00px;height:15.00px;background:#fff;border:1px solid #ABABAB;box-sizing:border-box;"></div>
<div class="a" style="left:1904.00px;top:944.00px;width:15.00px;height:15.00px;background:#fff;border:1px solid #C4C4C4;box-sizing:border-box;"></div>
<div class="a" style="left:1904.00px;top:520.00px;width:15.00px;height:71.00px;background:#fff;border:1px solid #ABABAB;box-sizing:border-box;"></div>
<div class="a" style="left:301.00px;top:1015.00px;width:1619.00px;height:1.00px;background:#C6C6C6;"></div>
<div class="a" style="left:0.00px;top:1018.00px;width:1920.00px;height:1.00px;background:#C8C8C8;"></div>
<div class="a" style="left:0.00px;top:1019.00px;width:1920.00px;height:20.00px;background:#F1F1F1;"></div>
<div class="a" style="left:0.00px;top:1039.00px;width:1920.00px;height:1.00px;background:#fff;"></div>
<div class="t" style="left:6.94px;top:1022.64px;font-size:12.00px;line-height:12.00px;color:#4A4A4A;transform:scaleX(0.9122);">Слайд 6 из 11</div>
<div class="t" style="left:128.94px;top:1022.64px;font-size:12.00px;line-height:12.00px;color:#4A4A4A;transform:scaleX(0.9866);">русский</div>
<div class="t" style="left:1395.61px;top:1022.64px;font-size:12.00px;line-height:12.00px;color:#4A4A4A;transform:scaleX(0.9849);">Заметки</div>
<div class="t" style="left:1476.01px;top:1022.64px;font-size:12.00px;line-height:12.00px;color:#4A4A4A;transform:scaleX(1.0226);">Примечания</div>
<div class="a" style="left:1565.00px;top:1019.00px;width:38.00px;height:20.00px;background:#C6C6C6;"></div>
<div class="t" style="left:1858.15px;top:1022.64px;font-size:12.00px;line-height:12.00px;color:#4A4A4A;transform:scaleX(0.9311);">115%</div>
<div class="a" style="left:0.00px;top:1040.00px;width:1920.00px;height:40.00px;background:#1C2D3A;"></div>
<div class="a" style="left:0.00px;top:1040.00px;width:1920.00px;height:1.00px;background:#13202A;"></div>
<div class="a" style="left:490.00px;top:1040.00px;width:48.00px;height:40.00px;background:#33434F;"></div>
<div class="a" style="left:534.00px;top:1040.00px;width:1.00px;height:40.00px;background:#1C2D3A;"></div>
<div class="a" style="left:151.00px;top:1078.00px;width:31.60px;height:2.00px;background:#76B9ED;"></div>
<div class="a" style="left:183.20px;top:1078.00px;width:7.80px;height:2.00px;background:#4F87B5;"></div>
<div class="a" style="left:200.20px;top:1078.00px;width:39.60px;height:2.00px;background:#76B9ED;"></div>
<div class="a" style="left:249.20px;top:1078.00px;width:39.60px;height:2.00px;background:#76B9ED;"></div>
<div class="a" style="left:298.00px;top:1078.00px;width:31.80px;height:2.00px;background:#76B9ED;"></div>
<div class="a" style="left:330.40px;top:1078.00px;width:7.80px;height:2.00px;background:#4F87B5;"></div>
<div class="a" style="left:490.00px;top:1078.00px;width:48.30px;height:2.00px;background:#76B9ED;"></div>
<div class="t" style="left:1771.82px;top:1054.34px;font-size:12.00px;line-height:12.00px;color:#fff;transform:scaleX(0.8987);">РУС</div>
<div class="t" style="left:1819.85px;top:1044.84px;font-size:12.00px;line-height:12.00px;color:#fff;transform:scaleX(0.9328);">11:54</div>
<div class="t" style="left:1806.57px;top:1062.84px;font-size:12.00px;line-height:12.00px;color:#fff;transform:scaleX(0.9092);">06.03.2023</div>
<div class="a" style="left:1915.00px;top:1040.00px;width:1.00px;height:40.00px;background:#4A5863;"></div>
<svg class="a" style="left:0.00px;top:0.00px;pointer-events:none;" width="1920" height="1080" viewBox="0 0 1920 1080"><path d="M1908 161.200h7l-3.500-4.200z" fill="#777"/><path d="M1908 950h7l-3.500 4.200z" fill="#777"/><path d="M1908 967.800h7l-3.500-3.800zM1908 972h7l-3.500-3.800z" fill="#777"/><path d="M1908 981.800h7l-3.500 3.800zM1908 986h7l-3.500 3.800z" fill="#777"/><g fill="none" stroke="#666" stroke-width="1"><path d="M98.500 1022.500h5.700v10h-5.700zM104.200 1022.500h7.300v2M104.200 1032.500v2.500M102.800 1033.700l1.400 1.500l1.400-1.500"/><path d="M107.600 1025.500l3.800 4.800M111.400 1025.500l-3.800 4.800" stroke-width="1.400"/><path d="M107 1031.700h5"/></g><path d="M1380 1030.500h10M1380 1033.500h10M1382 1027.500h6" stroke="#666" stroke-width="1.200"/><path d="M1383 1025.500l2-2.500l2 2.500z" fill="#666"/><path d="M1461 1023.500h12v8h-6l-3 3v-3h-3z" fill="#666"/><g fill="none" stroke="#666" stroke-width="1.200"><rect x="1577.500" y="1022.500" width="13" height="11"/><path d="M1580.500 1022.500v11M1580.500 1029.500h10"/><rect x="1582.500" y="1024.500" width="6" height="3" stroke-width="0.900"/></g><g fill="none" stroke="#666" stroke-width="1.100"><rect x="1615.500" y="1022.500" width="4.500" height="4"/><rect x="1624" y="1022.500" width="4.500" height="4"/><rect x="1615.500" y="1030.500" width="4.500" height="4"/><rect x="1624" y="1030.500" width="4.500" height="4"/></g><g fill="none" stroke="#666" stroke-width="1"><path d="M1659.500 1023.500q-3.500-1.500-6.500 0v9q3-1.500 6.500 0zM1659.500 1023.500q3.500-1.500 6.500 0v9q-3-1.500-6.500 0M1659.500 1032.500v2.500"/><path d="M1654.500 1026h3.500M1654.500 1028h3.500M1654.500 1030h3.500M1661 1026h3.500M1661 1028h3.500M1661 1030h3.500" stroke-width="0.700"/></g><g fill="none" stroke="#666" stroke-width="1.100"><path d="M1690.500 1022.500h13.500M1692 1023v6h10.500v-6M1697.200 1029v4.500M1694 1034h6.500"/></g><path d="M1722 1028.500h6" stroke="#555" stroke-width="1.400"/><path d="M1732 1028.500h100" stroke="#8A8A8A" stroke-width="1"/><rect x="1783" y="1023" width="3.500" height="11" fill="#555"/><path d="M1836 1028.500h8M1840 1024.500v8" stroke="#555" stroke-width="1.400"/><g fill="none" stroke="#666" stroke-width="1.100"><rect x="1900.500" y="1023.500" width="12" height="12"/><path d="M1906.500 1024.500v3M1906.500 1034.500v-3M1901.500 1029.500h3M1911.500 1029.500h-3M1905.300 1026l1.200-1.500l1.200 1.500M1905.300 1033l1.200 1.500l1.200-1.500M1903 1028.300l-1.500 1.200l1.500 1.200M1910 1028.300l1.500 1.200l-1.500 1.200" stroke-width="0.800"/></g><path d="M15.600 1054.300l6.900-1v6.400h-6.900zM23.400 1053.200l8.800-1.200v7.700h-8.800zM15.600 1060.600h6.900v6.400l-6.900-1zM23.400 1060.600h8.800v7.700l-8.800-1.200z" fill="#fff"/><circle cx="74.500" cy="1057" r="5.200" fill="none" stroke="#fff" stroke-width="1.500"/><path d="M70.800 1060.800l-6.800 6.800" stroke="#fff" stroke-width="1.700"/><g fill="none" stroke="#fff" stroke-width="1.300"><rect x="113.200" y="1056.600" width="10.400" height="6.600"/><path d="M112.600 1055v-2.200h11.600v2.200M112.600 1065v2.200h11.600v-2.200M126.700 1052v15.500"/></g><rect x="125.400" y="1056" width="2.600" height="3" fill="#fff"/><path d="M160 1050.500h8l2 2.500h11.500v15.500h-21.500z" fill="#F7C64A"/><path d="M160 1054.500h21.500v14h-21.500z" fill="#FBD969"/><path d="M164 1061.500h13.500v7h-3.500v-3.500h-6.500v3.500h-3.500z" fill="#3E8EDE"/><rect x="216" y="1051.500" width="14" height="17" fill="#fff"/><path d="M219 1054.500h9M219 1057.500h9M219 1060.500h9M219 1063.500h9M219 1066h9" stroke="#2B579A" stroke-width="1.200"/><path d="M208 1052.200l13-2.200v20l-13-2.200z" fill="#2B579A"/><circle cx="269" cy="1060" r="11" fill="#fff"/><path d="M263.800 1053.500l5.200 7v6.500M274.200 1053.500l-5.200 7" fill="none" stroke="#E5242A" stroke-width="2.200"/><rect x="315" y="1051.500" width="14" height="17" fill="#fff"/><path d="M318.500 1054.500h9M318.500 1057.500h9M318.500 1060.500h9M318.500 1063.500h9M318.500 1066h9" stroke="#217346" stroke-width="1.200"/><path d="M323 1052v16" stroke="#fff" stroke-width="0.800"/><path d="M307 1052.200l13-2.200v20l-13-2.200z" fill="#217346"/><rect x="357.500" y="1050.200" width="19.200" height="19.500" rx="2" fill="#F05A28"/><path d="M367 1048.300l12 11.700l-12 11.700l-12-11.700z" fill="#F4C08A"/><path d="M361 1054.200l12 11.600M373 1054.200l-12 11.600M358 1057l9 9M376 1057l-9 9M358 1063l9-9M376 1063l-9-9" stroke="#E0A060" stroke-width="0.600"/><path d="M358.500 1060q8.500-7.500 17 0q-8.500 7.500-17 0z" fill="#fff"/><circle cx="367" cy="1060" r="3.500" fill="#2F6FD0"/><circle cx="367" cy="1060" r="1.600" fill="#0B1E3A"/><circle cx="366" cy="1059" r="0.700" fill="#fff"/><ellipse cx="414.500" cy="1060.500" rx="10.500" ry="6.500" fill="#8E959C" transform="rotate(-18 414.500 1060.500)"/><ellipse cx="415.800" cy="1058" rx="10.800" ry="6.800" fill="#EDEEF2" transform="rotate(-18 415.800 1058)"/><ellipse cx="415.800" cy="1058" rx="10.800" ry="6.800" fill="none" stroke="#D8383F" stroke-width="1.500" transform="rotate(-18 415.800 1058)"/><path d="M411.500 1053l8.500 11M421.500 1052l-4 12.500" stroke="#8A97A5" stroke-width="1.200"/><circle cx="423.800" cy="1065.300" r="2.200" fill="none" stroke="#2F8FE0" stroke-width="1.500"/><circle cx="418.600" cy="1068" r="2.200" fill="none" stroke="#2F8FE0" stroke-width="1.500"/><circle cx="465" cy="1059.700" r="12" fill="#1A6FC9"/><path d="M453.200 1057.500q2-10 12.300-9.800q9.500 0.500 11.500 9.500q0.300 5.500-5 5.500h-4.500q2-5-3-6q-6-0.500-11.300 0.800z" fill="#3DC7A0"/><path d="M470 1049q6 2.500 7 9q0 4.500-4.500 4.700q3.500-8-2.500-13.700z" fill="#5FD068"/><path d="M459.500 1060.500q4-3 7.500 0q-1.500 6 4.500 7.500q-3.500 3.500-8.500 3q-6-3.500-3.500-10.500z" fill="#0E4A9A"/><path d="M462 1061q2.500-1.500 4.800 0q-1.200 3.600 1.700 5.300q-3 1.200-5.500-0.300q-2-2-1-5z" fill="#1C2D3A"/><rect x="511.500" y="1051.500" width="14" height="17" fill="#fff"/><circle cx="519.500" cy="1057.500" r="3.300" fill="none" stroke="#D24726" stroke-width="1.300"/><path d="M516.500 1063.500h7.500M516.500 1066h7.500" stroke="#D24726" stroke-width="1.200"/><path d="M502 1052.200l13-2.200v20l-13-2.200z" fill="#D24726"/><text x="210.6" y="1064.200" font-size="10.500" font-weight="bold" fill="#fff">W</text><text x="310.2" y="1064.200" font-size="10.500" font-weight="bold" fill="#fff">X</text><text x="505.6" y="1064.200" font-size="10.500" font-weight="bold" fill="#fff">P</text><path d="M1699.500 1063l5.500-5.500l5.500 5.500" fill="none" stroke="#fff" stroke-width="1.300"/><g fill="none" stroke="#fff" stroke-width="1.200"><rect x="1724.500" y="1055.500" width="11.500" height="8"/><path d="M1727.500 1066.500h6M1730.500 1063.500v3"/><rect x="1721.500" y="1054.500" width="4" height="3.500" fill="#1C2D3A"/></g><g fill="none" stroke="#fff" stroke-width="1.200"><path d="M1745.500 1058h2.500l3.500-3.500v11l-3.500-3.500h-2.500z"/><path d="M1754 1057.500q1.500 2.500 0 5M1756.800 1055.500q2.800 4.500 0 9M1759.600 1053.500q4 6.500 0 13"/></g><path d="M1879.500 1052.500h15v11h-3.500v3.500l-3.500-3.500h-8z" fill="#fff"/><path d="M1882 1055.500h10M1882 1058h10M1882 1060.500h6" stroke="#1C2D3A" stroke-width="0.900"/></svg>
</body></html>
